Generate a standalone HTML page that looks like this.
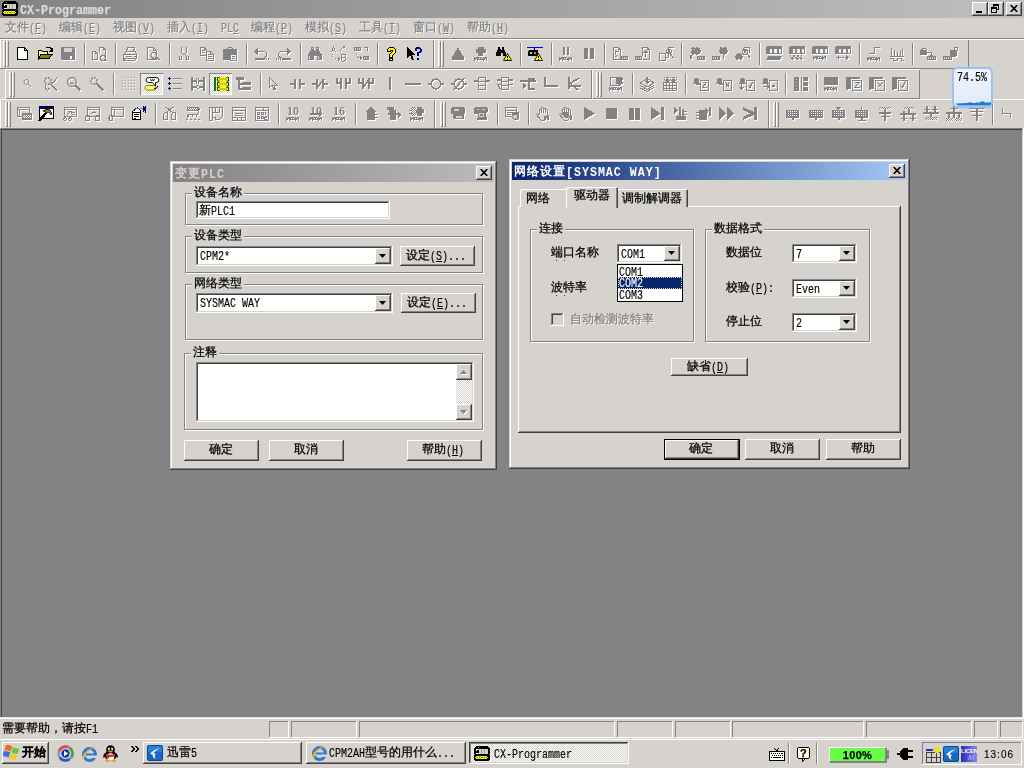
<!DOCTYPE html>
<html><head><meta charset="utf-8"><title>CX-Programmer</title>
<style>
*{box-sizing:border-box;margin:0;padding:0}
html,body{width:1024px;height:768px;overflow:hidden}
body{background:#848284;position:relative;font:12px/12px "Liberation Sans",sans-serif;color:#000;-webkit-text-stroke:0.25px}
div,span,svg{position:absolute;white-space:nowrap}
span.l,span.lb{position:relative;top:1px}u,span.t{position:static}
.l{font-family:"Liberation Mono",monospace;font-size:12px;display:inline-block;transform:scaleX(.8333);transform-origin:0 50%;-webkit-text-stroke:0.15px}
.lb{font-family:"Liberation Mono",monospace;font-size:12px;font-weight:bold;display:inline-block;transform:scaleX(.9722);transform-origin:0 50%}
u{text-decoration:underline}
.face{background:#d6d3ce}
.btn{background:#d6d3ce;box-shadow:inset -1px -1px #424142,inset 1px 1px #fff,inset -2px -2px #848284,inset 2px 2px #d6d3ce;text-align:center}
.btn .t{display:block;position:absolute;left:0;right:0;text-align:center}
.dbtn{background:#d6d3ce;border:1px solid #000;box-shadow:inset -1px -1px #424142,inset 1px 1px #fff,inset -2px -2px #848284,inset 2px 2px #d6d3ce}
.sunk{background:#fff;box-shadow:inset -1px -1px #fff,inset 1px 1px #848284,inset -2px -2px #d6d3ce,inset 2px 2px #424142}
.win{background:#d6d3ce;box-shadow:inset -1px -1px #424142,inset 1px 1px #d6d3ce,inset -2px -2px #848284,inset 2px 2px #fff}
.grp{border:1px solid #848284;box-shadow:1px 1px 0 #fff,inset 1px 1px 0 #fff}
.glab{background:#d6d3ce;padding:0 2px;height:12px}
.pane{box-shadow:inset -1px -1px #fff,inset 1px 1px #848284}
.cbtn{background:#d6d3ce;box-shadow:inset -1px -1px #424142,inset 1px 1px #fff,inset -2px -2px #848284,inset 2px 2px #d6d3ce}
.dis{color:#848284;text-shadow:1px 1px 0 #fff}
.chk{background-color:#fff;background-image:linear-gradient(45deg,#d6d3ce 25%,transparent 25%,transparent 75%,#d6d3ce 75%),linear-gradient(45deg,#d6d3ce 25%,transparent 25%,transparent 75%,#d6d3ce 75%);background-size:2px 2px;background-position:0 0,1px 1px}

.ic{overflow:visible}
.w .f{fill:#fff;stroke:none}.w .s{stroke:#fff;fill:none}.w .k{fill:url(#ckw);stroke:none}
.g .f{fill:#848284;stroke:none}.g .s{stroke:#848284;fill:none}.g .k{fill:url(#ck);stroke:none}
.e{fill:#d6d3ce;stroke:none}
.grip{width:3px;background:#d6d3ce;box-shadow:inset 1px 0 #fff,inset -1px 0 #848284,inset 0 1px #fff,inset 0 -1px #848284}
.sepv{width:2px;background:#fff;border-left:1px solid #848284}
.tbpress{box-shadow:inset 1px 1px #848284,inset -1px -1px #fff}
</style></head>
<body>
<div id="root" style="left:0;top:0;width:1024px;height:768px;will-change:transform">
<div class="" style="left:0px;top:0px;width:1024px;height:18px;background:linear-gradient(to right,#848284,#c0bec0)"></div><svg width="16" height="15" viewBox="0 0 17 16" preserveAspectRatio="none" style="left:2px;top:1px" shape-rendering="crispEdges">
<path d="M2 0h13v1h1v1h1v7h-1v1h1v5h-1v1H1v-1H0v-5h1V9H0V2h1V1h1z" fill="#000"/>
<rect x="2" y="3" width="13" height="5" fill="#d6d3ce"/><rect x="2" y="3" width="2" height="5" fill="#fff"/>
<path d="M3 4h2v3H2V5h1z" fill="#000"/><rect x="7" y="3" width="1" height="5" fill="#a0a0a0"/><rect x="11" y="3" width="1" height="5" fill="#a0a0a0"/>
<rect x="4" y="1" width="1" height="1" fill="#40c040"/>
<rect x="0" y="9" width="1" height="1" fill="#848284"/><rect x="16" y="9" width="1" height="1" fill="#848284"/>
<path d="M2 11h12v1h1v1h-1v1H2v-1H1v-1h1z" fill="#f0f000"/><path d="M3 12h1v1H3zM5 12h1v1H5zM7 12h1v1H7zM9 12h1v1H9zM11 12h1v1h-1zM13 12h1v1h-1z" fill="#808000"/></svg><div class="" style="left:20px;top:2px;height:14px;line-height:14px;color:#dcdad6"><span class="lb" style="margin-right:-2.6px">CX-Programmer</span></div><div class="cbtn" style="left:972px;top:2px;width:16px;height:14px;<span></span>"></div><div style="left:976px;top:11px;width:6px;height:2px;background:#000"></div><div class="cbtn" style="left:988px;top:2px;width:16px;height:14px;"></div><svg width="10" height="10" viewBox="0 0 10 10" style="left:991px;top:4px" shape-rendering="crispEdges">
<path d="M2 0h6v6h-2v-1h1v-3h-4v1h-1z" fill="#000"/><path d="M0 3h6v6h-6zM1 5v3h4v-3z" fill="#000" fill-rule="evenodd"/></svg><div class="cbtn" style="left:1006px;top:2px;width:16px;height:14px;"></div><svg width="8" height="7" viewBox="0 0 8 7" style="left:1010px;top:5px"><path d="M.7 0L7.300 7M7.300 0L.7 7" stroke="#000" stroke-width="1.600" fill="none"/></svg>
<div class="face" style="left:0px;top:18px;width:1024px;height:20px;"></div><div class="dis" style="left:5px;top:20px;height:14px;line-height:14px;">文件<span class="l" style="margin-right:-3.6px">(<u>F</u>)</span></div><div class="dis" style="left:59px;top:20px;height:14px;line-height:14px;">编辑<span class="l" style="margin-right:-3.6px">(<u>E</u>)</span></div><div class="dis" style="left:113px;top:20px;height:14px;line-height:14px;">视图<span class="l" style="margin-right:-3.6px">(<u>V</u>)</span></div><div class="dis" style="left:167px;top:20px;height:14px;line-height:14px;">插入<span class="l" style="margin-right:-3.6px">(<u>I</u>)</span></div><div class="dis" style="left:221px;top:20px;height:14px;line-height:14px;"><span class="l" style="margin-right:-2.4px">PL</span><span class="l" style="margin-right:-1.2px"><u>C</u></span></div><div class="dis" style="left:251px;top:20px;height:14px;line-height:14px;">编程<span class="l" style="margin-right:-3.6px">(<u>P</u>)</span></div><div class="dis" style="left:305px;top:20px;height:14px;line-height:14px;">模拟<span class="l" style="margin-right:-3.6px">(<u>S</u>)</span></div><div class="dis" style="left:359px;top:20px;height:14px;line-height:14px;">工具<span class="l" style="margin-right:-3.6px">(<u>T</u>)</span></div><div class="dis" style="left:413px;top:20px;height:14px;line-height:14px;">窗口<span class="l" style="margin-right:-3.6px">(<u>W</u>)</span></div><div class="dis" style="left:467px;top:20px;height:14px;line-height:14px;">帮助<span class="l" style="margin-right:-3.6px">(<u>H</u>)</span></div>
<svg width="0" height="0" style="left:0;top:0"><defs><pattern id="ck" width="2" height="2" patternUnits="userSpaceOnUse"><rect width="1" height="1" fill="#848284"/><rect x="1" y="1" width="1" height="1" fill="#848284"/></pattern><pattern id="ckw" width="2" height="2" patternUnits="userSpaceOnUse"><rect x="1" width="1" height="1" fill="#fff"/><rect y="1" width="1" height="1" fill="#fff"/></pattern><pattern id="dotw" width="2" height="2" patternUnits="userSpaceOnUse"><rect x="1" y="1" width="1" height="1" fill="#fff"/></pattern></defs></svg><div class="face" style="left:0;top:38px;width:1024px;height:91px"></div><div class="" style="left:0px;top:38px;width:1024px;height:1px;background:#848284"></div><div class="" style="left:0px;top:39px;width:1024px;height:1px;background:#fff"></div><div class="" style="left:0px;top:39px;width:434px;height:30px;box-shadow:inset 1px 1px #fff,inset -1px -1px #848284"></div><div class="" style="left:434px;top:39px;width:535px;height:30px;box-shadow:inset 1px 1px #fff,inset -1px -1px #848284"></div><div class="grip" style="left:3px;top:41px;width:3px;height:26px;"></div><div class="grip" style="left:6px;top:41px;width:3px;height:26px;"></div><div class="grip" style="left:438px;top:41px;width:3px;height:26px;"></div><div class="grip" style="left:441px;top:41px;width:3px;height:26px;"></div><div class="" style="left:0px;top:68px;width:968px;height:1px;background:#848284"></div><div class="" style="left:5px;top:69px;width:587px;height:30px;box-shadow:inset 1px 1px #fff,inset -1px -1px #848284"></div><div class="" style="left:592px;top:69px;width:328px;height:30px;box-shadow:inset 1px 1px #fff,inset -1px -1px #848284"></div><div class="grip" style="left:9px;top:72px;width:3px;height:25px;"></div><div class="grip" style="left:12px;top:72px;width:3px;height:25px;"></div><div class="grip" style="left:596px;top:72px;width:3px;height:25px;"></div><div class="grip" style="left:599px;top:72px;width:3px;height:25px;"></div><div class="" style="left:0px;top:99px;width:435px;height:30px;box-shadow:inset 1px 1px #fff,inset -1px -1px #848284"></div><div class="" style="left:435px;top:99px;width:334px;height:30px;box-shadow:inset 1px 1px #fff,inset -1px -1px #848284"></div><div class="" style="left:769px;top:99px;width:256px;height:30px;box-shadow:inset 1px 1px #fff,inset -1px -1px #848284"></div><div class="grip" style="left:5px;top:102px;width:3px;height:25px;"></div><div class="grip" style="left:8px;top:102px;width:3px;height:25px;"></div><div class="grip" style="left:440px;top:102px;width:3px;height:25px;"></div><div class="grip" style="left:443px;top:102px;width:3px;height:25px;"></div><div class="grip" style="left:773px;top:102px;width:3px;height:25px;"></div><div class="grip" style="left:776px;top:102px;width:3px;height:25px;"></div><svg class="ic" width="16" height="16" viewBox="0 0 16 16" shape-rendering="crispEdges" style="left:14px;top:46px"><path d="M3.5 1.5h7l3 3v9h-10z" fill="#fff" stroke="#000"/><path d="M10.5 1.500v3h3" fill="none" stroke="#000"/></svg><svg class="ic" width="16" height="16" viewBox="0 0 16 16" shape-rendering="crispEdges" style="left:37px;top:46px"><path d="M1.500 4.500h3l1 1h5v2.500h-6.500l-2.500 4.500z" fill="#ffff9c" stroke="#000"/><path d="M1.500 12.500l3-4.500h11l-3.500 4.500z" fill="#848200" stroke="#000"/><path d="M8.500 2.500q3-3 6 .5" fill="none" stroke="#000"/><path d="M16 1v4.500h-4.500z" fill="#000"/></svg><svg class="ic" width="16" height="16" viewBox="0 0 16 16" shape-rendering="crispEdges" style="left:60px;top:46px"><g class="w" transform="translate(1,1)"><path class="f" d="M1 1h13l1 1v12H2l-1-1z"/></g><g class="g"><path class="f" d="M1 1h13l1 1v12H2l-1-1z"/></g><path class="e" d="M4 2h8v4h-8z"/><path d="M10 10h2v3h-2z" fill="#fff"/><path d="M13 2h1v1h-1z" fill="#d6d3ce"/></svg><div class="sepv" style="left:84px;top:43px;width:2px;height:22px;"></div><svg class="ic" width="16" height="16" viewBox="0 0 16 16" shape-rendering="crispEdges" style="left:91px;top:46px"><g class="w" transform="translate(1,1)"><path class="s" d="M1.5 13.500v-8h3l2 2v6zM8.500 5.500v-4h4l2 2v6"/><path class="s" d="M4.500 5.500v2h2M12.500 1.500v2h2"/><path class="s" d="M12 9.500a2.500 2.500 0 1 1-.1 0M13.500 13l2 2"/></g><g class="g"><path class="s" d="M1.5 13.500v-8h3l2 2v6zM8.500 5.500v-4h4l2 2v6"/><path class="s" d="M4.500 5.500v2h2M12.500 1.500v2h2"/><path class="s" d="M12 9.500a2.500 2.500 0 1 1-.1 0M13.500 13l2 2"/></g></svg><div class="sepv" style="left:115px;top:43px;width:2px;height:22px;"></div><svg class="ic" width="16" height="16" viewBox="0 0 16 16" shape-rendering="crispEdges" style="left:122px;top:46px"><g class="w" transform="translate(1,1)"><path class="s" d="M4.500 5.500l1-4h7l-1 4M1.500 8.500l3-3h9l1 3v4h-13zM1.500 8.500h13M3.500 10.500h6M11.500 10.500h2M2.500 12.500l-1 2h11l2-2"/></g><g class="g"><path class="s" d="M4.500 5.500l1-4h7l-1 4M1.500 8.500l3-3h9l1 3v4h-13zM1.500 8.500h13M3.500 10.500h6M11.500 10.500h2M2.500 12.500l-1 2h11l2-2"/></g></svg><svg class="ic" width="16" height="16" viewBox="0 0 16 16" shape-rendering="crispEdges" style="left:145px;top:46px"><g class="w" transform="translate(1,1)"><path class="s" d="M2.500 1.500h6l3 3v9h-9zM8.500 1.500v3h3"/><path class="s" d="M9 6.500a3 3 0 1 1-.1 0M11.500 11.500l3 3M12.500 11.500l3 3"/></g><g class="g"><path class="s" d="M2.500 1.500h6l3 3v9h-9zM8.500 1.500v3h3"/><path class="s" d="M9 6.500a3 3 0 1 1-.1 0M11.500 11.500l3 3M12.500 11.500l3 3"/></g></svg><div class="sepv" style="left:169px;top:43px;width:2px;height:22px;"></div><svg class="ic" width="16" height="16" viewBox="0 0 16 16" shape-rendering="crispEdges" style="left:176px;top:46px"><g class="w" transform="translate(1,1)"><path class="s" d="M5.500 1v5l2 3M10.500 1v5l-2 3M6.500 9.500l-1.500 1M9.500 9.500l1.500 1"/><path class="s" d="M4.500 10a1.500 2 0 1 1-.1 0M11.500 10a1.500 2 0 1 1-.1 0"/></g><g class="g"><path class="s" d="M5.500 1v5l2 3M10.500 1v5l-2 3M6.500 9.500l-1.500 1M9.500 9.500l1.500 1"/><path class="s" d="M4.500 10a1.500 2 0 1 1-.1 0M11.500 10a1.500 2 0 1 1-.1 0"/></g></svg><svg class="ic" width="16" height="16" viewBox="0 0 16 16" shape-rendering="crispEdges" style="left:199px;top:46px"><g class="w" transform="translate(1,1)"><path class="s" d="M1.500 1.500h4l2 2v6h-6zM5.500 1.500v2h2M3 4.500h3M3 6.500h3"/><path class="s" d="M7.500 5.500h4l3 3v6h-7zM11.500 5.500v3h3M9 8.500h2M9 10.500h4M9 12.500h4"/></g><g class="g"><path class="s" d="M1.500 1.500h4l2 2v6h-6zM5.500 1.500v2h2M3 4.500h3M3 6.500h3"/><path class="s" d="M7.500 5.500h4l3 3v6h-7zM11.500 5.500v3h3M9 8.500h2M9 10.500h4M9 12.500h4"/></g></svg><svg class="ic" width="16" height="16" viewBox="0 0 16 16" shape-rendering="crispEdges" style="left:222px;top:46px"><g class="w" transform="translate(1,1)"><path class="f" d="M1 3h4l1-2h4l1 2h4v5H8v6H1z"/><path class="s" d="M8.500 8.500h6v6h-6zM10 10.500h3M10 12.500h3"/></g><g class="g"><path class="f" d="M1 3h4l1-2h4l1 2h4v5H8v6H1z"/><path class="s" d="M8.500 8.500h6v6h-6zM10 10.500h3M10 12.500h3"/></g><path class="e" d="M6 2h4v1h-4z"/></svg><div class="sepv" style="left:246px;top:43px;width:2px;height:22px;"></div><svg class="ic" width="16" height="16" viewBox="0 0 16 16" shape-rendering="crispEdges" style="left:253px;top:46px"><g class="w" transform="translate(1,1)"><path class="s" d="M4 5.500h6.500q3 0 3 3t-3 3"/><path class="f" d="M1 5.500l4-3.500v7z"/><path class="f" d="M2 12h9v2h-9z"/><path class="s" d="M11.500 12v2M13.500 12v2M15.500 12v2"/></g><g class="g"><path class="s" d="M4 5.500h6.500q3 0 3 3t-3 3"/><path class="f" d="M1 5.500l4-3.500v7z"/><path class="f" d="M2 12h9v2h-9z"/><path class="s" d="M11.500 12v2M13.500 12v2M15.500 12v2"/></g></svg><svg class="ic" width="16" height="16" viewBox="0 0 16 16" shape-rendering="crispEdges" style="left:276px;top:46px"><g class="w" transform="translate(1,1)"><path class="s" d="M12 5.500h-6.500q-3 0-3 3t3 3"/><path class="f" d="M15 5.500l-4-3.500v7z"/><path class="f" d="M6 12h9v2h-9z"/><path class="s" d="M0.500 12v2M2.500 12v2M4.500 12v2"/></g><g class="g"><path class="s" d="M12 5.500h-6.500q-3 0-3 3t3 3"/><path class="f" d="M15 5.500l-4-3.500v7z"/><path class="f" d="M6 12h9v2h-9z"/><path class="s" d="M0.500 12v2M2.500 12v2M4.500 12v2"/></g></svg><div class="sepv" style="left:300px;top:43px;width:2px;height:22px;"></div><svg class="ic" width="16" height="16" viewBox="0 0 16 16" shape-rendering="crispEdges" style="left:307px;top:46px"><g class="w" transform="translate(1,1)"><path class="f" d="M4 1h3v3l1 1 1-1V1h3v3l3 5v5h-5v-4H7v4H1V9l3-5z"/></g><g class="g"><path class="f" d="M4 1h3v3l1 1 1-1V1h3v3l3 5v5h-5v-4H7v4H1V9l3-5z"/></g><path class="e" d="M2 10h1v3h-1z"/><path class="e" d="M11 10h1v3h-1z"/><path class="e" d="M5 2h1v1h-1z"/><path class="e" d="M10 2h1v1h-1z"/></svg><svg class="ic" width="16" height="16" viewBox="0 0 16 16" shape-rendering="crispEdges" style="left:330px;top:46px"><g class="w" transform="translate(1,1)"><path class="s" d="M1.500 6l2-5 2 5M2.500 4.500h2"/><path class="s" stroke-dasharray="1 1" d="M2.500 8q0 5 5 5"/><path class="s" stroke-dasharray="1 1" d="M13.500 1q-3 1-3 4"/><path class="f" d="M8 10.500l3 2.500-3 2.500zM12 0h3v3z"/><path class="s" d="M11.500 15V8h2.500q1.500 0 1.500 1.750T14 11.500h-2.500M14 11.500q1.500 0 1.500 1.750T14 15h-2.500"/></g><g class="g"><path class="s" d="M1.500 6l2-5 2 5M2.500 4.500h2"/><path class="s" stroke-dasharray="1 1" d="M2.500 8q0 5 5 5"/><path class="s" stroke-dasharray="1 1" d="M13.500 1q-3 1-3 4"/><path class="f" d="M8 10.500l3 2.500-3 2.500zM12 0h3v3z"/><path class="s" d="M11.500 15V8h2.500q1.500 0 1.500 1.750T14 11.500h-2.500M14 11.500q1.500 0 1.500 1.750T14 15h-2.500"/></g></svg><svg class="ic" width="16" height="16" viewBox="0 0 16 16" shape-rendering="crispEdges" style="left:353px;top:46px"><g class="w" transform="translate(1,1)"><path class="f" d="M1 1h7v4H1z"/><path class="s" d="M11 1.500h3v3"/><path class="s" stroke-dasharray="1 1" d="M3.500 6q0 6 4 6"/><path class="f" d="M7 9.500l3 2.500-3 2.500z"/><path class="f" d="M10 10h6v4h-6z"/></g><g class="g"><path class="f" d="M1 1h7v4H1z"/><path class="s" d="M11 1.500h3v3"/><path class="s" stroke-dasharray="1 1" d="M3.500 6q0 6 4 6"/><path class="f" d="M7 9.500l3 2.500-3 2.500z"/><path class="f" d="M10 10h6v4h-6z"/></g><path class="e" d="M2 2h1v2h-1z"/><path class="e" d="M4 2h1v2h-1z"/><path class="e" d="M6 2h1v2h-1z"/><path class="e" d="M11 11h1v2h-1z"/><path class="e" d="M13 11h1v2h-1z"/></svg><div class="sepv" style="left:377px;top:43px;width:2px;height:22px;"></div><svg class="ic" width="16" height="16" viewBox="0 0 16 16" shape-rendering="crispEdges" style="left:384px;top:46px"><path d="M3.500 5.500v-2l2-2h4l2 2v3l-3 3v2h-3v-3l3-3v-1h-2v1zM5.500 12.500h3v2h-3z" fill="#ffff00" stroke="#000"/></svg><svg class="ic" width="16" height="16" viewBox="0 0 16 16" shape-rendering="crispEdges" style="left:407px;top:46px"><path d="M0 1v11l3-3 2 5h2l-2-5h4z" fill="#000"/><path d="M7.500 5V3l2-2h3l2 2v3l-3 2v2h-2V7l3-2V3h-3v2zM9.500 12h2v2h-2z" fill="#000080"/></svg><svg class="ic" width="16" height="16" viewBox="0 0 16 16" shape-rendering="crispEdges" style="left:450px;top:46px"><g class="w" transform="translate(1,1)"><path class="f" d="M8 1l6.500 11-1 2h-11l-1-2z"/></g><g class="g"><path class="f" d="M8 1l6.500 11-1 2h-11l-1-2z"/></g></svg><svg class="ic" width="16" height="16" viewBox="0 0 16 16" shape-rendering="crispEdges" style="left:473px;top:46px"><g class="w" transform="translate(1,1)"><path class="f" d="M5 1h6v2h2v4h-3v3H5V7H3V3h2z"/><path class="s" d="M2 11q-1.5 1.5 0 3.5M4 11q1.5 1.500 0 3.5M2.2 14.2l1.500 -3M6.5 11q-1.5 1.5 0 3.5M8.5 11q1.5 1.500 0 3.5M6.7 14.2l1.500 -3M11 11q-1.5 1.5 0 3.5M13 11q1.5 1.500 0 3.5M11.2 14.2l1.500 -3"/></g><g class="g"><path class="f" d="M5 1h6v2h2v4h-3v3H5V7H3V3h2z"/><path class="s" d="M2 11q-1.5 1.5 0 3.5M4 11q1.5 1.500 0 3.5M2.2 14.2l1.500 -3M6.5 11q-1.5 1.5 0 3.5M8.5 11q1.5 1.500 0 3.5M6.7 14.2l1.500 -3M11 11q-1.5 1.5 0 3.5M13 11q1.5 1.500 0 3.5M11.2 14.2l1.500 -3"/></g></svg><svg class="ic" width="16" height="16" viewBox="0 0 16 16" shape-rendering="crispEdges" style="left:496px;top:46px"><path d="M2 1h2v2l1 1 1-1V1h2v2l2 4v3H7V7H5v3H0V7l2-4z" fill="#000"/><path shape-rendering="auto" d="M11.500 7.500l4 7h-8z" fill="#ffff00" stroke="#000" stroke-width=".9"/><path d="M11 10h1v2h-1zM11 13h1v1h-1z" fill="#000"/></svg><div class="sepv" style="left:520px;top:43px;width:2px;height:22px;"></div><svg class="ic" width="16" height="16" viewBox="0 0 16 16" shape-rendering="crispEdges" style="left:527px;top:46px"><path d="M0 1.500h16" stroke="#0000ff" stroke-width="1.500"/><path d="M7.500 2v3" stroke="#000"/><rect x="1" y="4" width="10" height="6" rx="2" fill="#000"/><rect x="3" y="6" width="2" height="2" fill="#80ff80"/><rect x="7" y="6" width="2" height="2" fill="#ff6060"/><path shape-rendering="auto" d="M11.500 7.500l4 7h-8z" fill="#ffff00" stroke="#000" stroke-width=".9"/><path d="M11 10h1v2h-1zM11 13h1v1h-1z" fill="#000"/></svg><div class="sepv" style="left:551px;top:43px;width:2px;height:22px;"></div><svg class="ic" width="16" height="16" viewBox="0 0 16 16" shape-rendering="crispEdges" style="left:558px;top:46px"><g class="w" transform="translate(1,1)"><path class="f" d="M5 1h2v8h-2z"/><path class="f" d="M9 1h2v8h-2z"/><path class="s" d="M2 11q-1.5 1.5 0 3.5M4 11q1.5 1.500 0 3.5M2.2 14.2l1.500 -3M6.5 11q-1.5 1.5 0 3.5M8.5 11q1.5 1.500 0 3.5M6.7 14.2l1.500 -3M11 11q-1.5 1.5 0 3.5M13 11q1.5 1.500 0 3.5M11.2 14.2l1.500 -3"/></g><g class="g"><path class="f" d="M5 1h2v8h-2z"/><path class="f" d="M9 1h2v8h-2z"/><path class="s" d="M2 11q-1.5 1.5 0 3.5M4 11q1.5 1.500 0 3.5M2.2 14.2l1.500 -3M6.5 11q-1.5 1.5 0 3.5M8.5 11q1.5 1.500 0 3.5M6.7 14.2l1.500 -3M11 11q-1.5 1.5 0 3.5M13 11q1.5 1.500 0 3.5M11.2 14.2l1.500 -3"/></g></svg><svg class="ic" width="16" height="16" viewBox="0 0 16 16" shape-rendering="crispEdges" style="left:581px;top:46px"><g class="w" transform="translate(1,1)"><path class="f" d="M3 2h4v11h-4z"/><path class="f" d="M9 2h4v11h-4z"/></g><g class="g"><path class="f" d="M3 2h4v11h-4z"/><path class="f" d="M9 2h4v11h-4z"/></g></svg><div class="sepv" style="left:604px;top:43px;width:2px;height:22px;"></div><svg class="ic" width="16" height="16" viewBox="0 0 16 16" shape-rendering="crispEdges" style="left:612px;top:46px"><g class="w" transform="translate(1,1)"><path class="s" d="M1.500 1.500h5l2 2v9.500h-7zM6.500 1.500v2h2M3.500 4v5M3.500 5.500h3M5 9.500l-1.500 1.500"/><path class="f" d="M9 10h7v4H9z"/></g><g class="g"><path class="s" d="M1.500 1.500h5l2 2v9.500h-7zM6.500 1.500v2h2M3.500 4v5M3.500 5.500h3M5 9.500l-1.500 1.500"/><path class="f" d="M9 10h7v4H9z"/></g><path class="e" d="M10 11h1v2h-1z"/><path class="e" d="M12 11h1v2h-1z"/><path class="e" d="M14 11h1v2h-1z"/></svg><svg class="ic" width="16" height="16" viewBox="0 0 16 16" shape-rendering="crispEdges" style="left:635px;top:46px"><g class="w" transform="translate(1,1)"><path class="s" d="M7.500 10V1.500h5l2 2v9.500h-7M12.500 1.500v2h2M10.500 11V5M8.500 7l2-2 2 2"/><path class="f" d="M0 10h7v4H0z"/></g><g class="g"><path class="s" d="M7.500 10V1.500h5l2 2v9.500h-7M12.500 1.500v2h2M10.500 11V5M8.500 7l2-2 2 2"/><path class="f" d="M0 10h7v4H0z"/></g><path class="e" d="M1 11h1v2h-1z"/><path class="e" d="M3 11h1v2h-1z"/><path class="e" d="M5 11h1v2h-1z"/></svg><svg class="ic" width="16" height="16" viewBox="0 0 16 16" shape-rendering="crispEdges" style="left:658px;top:46px"><g class="w" transform="translate(1,1)"><path class="s" d="M1.500 7.500h6v7h-6zM7.500 11.500h3V1.500h5"/><path class="s" d="M11 3a2.500 2.500 0 1 1-.1 0M12.500 8l3 4M9.500 3l3 4M12.500 3l-3 4"/></g><g class="g"><path class="s" d="M1.500 7.500h6v7h-6zM7.500 11.500h3V1.500h5"/><path class="s" d="M11 3a2.500 2.500 0 1 1-.1 0M12.500 8l3 4M9.500 3l3 4M12.500 3l-3 4"/></g></svg><div class="sepv" style="left:681px;top:43px;width:2px;height:22px;"></div><svg class="ic" width="16" height="16" viewBox="0 0 16 16" shape-rendering="crispEdges" style="left:689px;top:46px"><g class="w" transform="translate(1,1)"><path class="f" d="M3 1h2v1h2V1h2v1h2v2h1v2h-1v2H9v1H7V8H5v1H3V7H2V5h1V3H2V2h1z"/><path class="f" d="M1 9h2v4H1z"/><path class="f" d="M8 10h8v4H8z"/></g><g class="g"><path class="f" d="M3 1h2v1h2V1h2v1h2v2h1v2h-1v2H9v1H7V8H5v1H3V7H2V5h1V3H2V2h1z"/><path class="f" d="M1 9h2v4H1z"/><path class="f" d="M8 10h8v4H8z"/></g><path class="e" d="M9 11h1v2h-1z"/><path class="e" d="M11 11h1v2h-1z"/><path class="e" d="M13 11h1v2h-1z"/><path class="e" d="M5 3h1v1h-1z"/><path class="e" d="M8 5h1v1h-1z"/></svg><svg class="ic" width="16" height="16" viewBox="0 0 16 16" shape-rendering="crispEdges" style="left:712px;top:46px"><g class="w" transform="translate(1,1)"><path class="f" d="M8 1h2v1h2V1h2v1h1v2h1v2h-1v2h-2v1h-2V8H8V6H7V4h1z"/><path class="s" d="M11.500 13V5M9.500 7l2-2 2 2"/><path class="f" d="M0 10h8v4H0z"/></g><g class="g"><path class="f" d="M8 1h2v1h2V1h2v1h1v2h1v2h-1v2h-2v1h-2V8H8V6H7V4h1z"/><path class="s" d="M11.500 13V5M9.500 7l2-2 2 2"/><path class="f" d="M0 10h8v4H0z"/></g><path class="e" d="M1 11h1v2h-1z"/><path class="e" d="M3 11h1v2h-1z"/><path class="e" d="M5 11h1v2h-1z"/></svg><svg class="ic" width="16" height="16" viewBox="0 0 16 16" shape-rendering="crispEdges" style="left:735px;top:46px"><g class="w" transform="translate(1,1)"><path class="f" d="M1 8h2V7h2v1h2v2h1v2H7v2H5v-1H3v1H1v-2H0v-2h1z"/><path class="s" d="M8.500 1.500h6v5M8.500 1.500v2"/><path class="s" d="M10 3.500a2.500 2.500 0 1 1-.1 0M12 8l3.500 4.500M8.500 3.500l3 4M11.500 3.500l-3 4"/></g><g class="g"><path class="f" d="M1 8h2V7h2v1h2v2h1v2H7v2H5v-1H3v1H1v-2H0v-2h1z"/><path class="s" d="M8.500 1.500h6v5M8.500 1.500v2"/><path class="s" d="M10 3.500a2.500 2.500 0 1 1-.1 0M12 8l3.500 4.500M8.500 3.500l3 4M11.500 3.500l-3 4"/></g></svg><div class="sepv" style="left:759px;top:43px;width:2px;height:22px;"></div><svg class="ic" width="16" height="16" viewBox="0 0 16 16" shape-rendering="crispEdges" style="left:766px;top:46px"><g class="w" transform="translate(1,1)"><path class="f" d="M1 0h14l1 1v7H0V1z"/><path class="f" d="M2 10h14l-2 4H0z"/></g><g class="g"><path class="f" d="M1 0h14l1 1v7H0V1z"/><path class="f" d="M2 10h14l-2 4H0z"/></g><path d="M2 3h4v4H2zM7 3h4v4H7zM12 3h3v4h-3z" fill="#f4f4f4"/><path d="M2 3h2v4H2zM7 3h1v4H7zM12 3h1v4h-1z" fill="#848284"/></svg><svg class="ic" width="16" height="16" viewBox="0 0 16 16" shape-rendering="crispEdges" style="left:789px;top:46px"><g class="w" transform="translate(1,1)"><path class="f" d="M1 0h14l1 1v7H0V1z"/><path class="s" d="M1 9.500l2 2.500 2-2.500 2 2.500 2-2.500 2 2.500 2-2.500"/><path class="f" d="M2 12h3l-1.500 2zM7 12h3l-1.500 2zM11 12h3l-1.500 2z"/></g><g class="g"><path class="f" d="M1 0h14l1 1v7H0V1z"/><path class="s" d="M1 9.500l2 2.500 2-2.500 2 2.500 2-2.500 2 2.500 2-2.500"/><path class="f" d="M2 12h3l-1.500 2zM7 12h3l-1.500 2zM11 12h3l-1.500 2z"/></g><path d="M2 3h4v4H2zM7 3h4v4H7zM12 3h3v4h-3z" fill="#f4f4f4"/><path d="M2 3h2v4H2zM7 3h1v4H7zM12 3h1v4h-1z" fill="#848284"/></svg><svg class="ic" width="16" height="16" viewBox="0 0 16 16" shape-rendering="crispEdges" style="left:812px;top:46px"><g class="w" transform="translate(1,1)"><path class="f" d="M1 0h14l1 1v7H0V1z"/><path class="s" d="M2 10q-1.5 1.5 0 3.5M4 10q1.5 1.500 0 3.5M2.2 13.2l1.500 -3M6.5 10q-1.5 1.5 0 3.5M8.5 10q1.5 1.500 0 3.5M6.7 13.2l1.500 -3M11 10q-1.5 1.5 0 3.5M13 10q1.5 1.500 0 3.5M11.2 13.2l1.500 -3"/></g><g class="g"><path class="f" d="M1 0h14l1 1v7H0V1z"/><path class="s" d="M2 10q-1.5 1.5 0 3.5M4 10q1.5 1.500 0 3.5M2.2 13.2l1.500 -3M6.5 10q-1.5 1.5 0 3.5M8.5 10q1.5 1.500 0 3.5M6.7 13.2l1.500 -3M11 10q-1.5 1.5 0 3.5M13 10q1.5 1.500 0 3.5M11.2 13.2l1.500 -3"/></g><path d="M2 3h4v4H2zM7 3h4v4H7zM12 3h3v4h-3z" fill="#f4f4f4"/><path d="M2 3h2v4H2zM7 3h1v4H7zM12 3h1v4h-1z" fill="#848284"/></svg><svg class="ic" width="16" height="16" viewBox="0 0 16 16" shape-rendering="crispEdges" style="left:835px;top:46px"><g class="w" transform="translate(1,1)"><path class="f" d="M1 0h14l1 1v7H0V1z"/><path class="s" stroke-dasharray="2 1" d="M1 11.500h11"/><path class="f" d="M11 9l3 2.500-3 2.500z"/><path class="s" d="M3.500 9.500v4"/></g><g class="g"><path class="f" d="M1 0h14l1 1v7H0V1z"/><path class="s" stroke-dasharray="2 1" d="M1 11.500h11"/><path class="f" d="M11 9l3 2.500-3 2.500z"/><path class="s" d="M3.500 9.500v4"/></g><path d="M2 3h4v4H2zM7 3h4v4H7zM12 3h3v4h-3z" fill="#f4f4f4"/><path d="M2 3h2v4H2zM7 3h1v4H7zM12 3h1v4h-1z" fill="#848284"/></svg><div class="sepv" style="left:859px;top:43px;width:2px;height:22px;"></div><svg class="ic" width="16" height="16" viewBox="0 0 16 16" shape-rendering="crispEdges" style="left:866px;top:46px"><g class="w" transform="translate(1,1)"><path class="s" d="M3 7.500h5V1.500h6"/><path class="s" d="M2 11q-1.5 1.5 0 3.5M4 11q1.5 1.500 0 3.5M2.2 14.2l1.500 -3M6.5 11q-1.5 1.5 0 3.5M8.5 11q1.5 1.500 0 3.5M6.7 14.2l1.500 -3M11 11q-1.5 1.5 0 3.5M13 11q1.5 1.500 0 3.5M11.2 14.2l1.500 -3"/></g><g class="g"><path class="s" d="M3 7.500h5V1.500h6"/><path class="s" d="M2 11q-1.5 1.5 0 3.5M4 11q1.5 1.500 0 3.5M2.2 14.2l1.500 -3M6.5 11q-1.5 1.5 0 3.5M8.5 11q1.5 1.500 0 3.5M6.7 14.2l1.500 -3M11 11q-1.5 1.5 0 3.5M13 11q1.5 1.500 0 3.5M11.2 14.2l1.500 -3"/></g></svg><svg class="ic" width="16" height="16" viewBox="0 0 16 16" shape-rendering="crispEdges" style="left:889px;top:46px"><g class="w" transform="translate(1,1)"><path class="s" d="M2.500 2v8M5.500 4v6M8.500 6v4M11.500 5v5M13.500 3v7M1 10.500h14"/><path class="s" d="M1 12.500h3v2h4v-2h4v2h3"/></g><g class="g"><path class="s" d="M2.500 2v8M5.500 4v6M8.500 6v4M11.500 5v5M13.500 3v7M1 10.500h14"/><path class="s" d="M1 12.500h3v2h4v-2h4v2h3"/></g></svg><div class="sepv" style="left:912px;top:43px;width:2px;height:22px;"></div><svg class="ic" width="16" height="16" viewBox="0 0 16 16" shape-rendering="crispEdges" style="left:920px;top:46px"><g class="w" transform="translate(1,1)"><path class="f" d="M1 5a3 3 0 0 1 6 0v1H6V5a2 2 0 0 0-4 0v1H1z"/><path class="f" d="M0 4h7v5H0z"/><path class="s" d="M7 6.500h4.500v3"/><path class="f" d="M11 8h1l1 2h-3z"/><path class="f" d="M7 10h9v4H7z"/></g><g class="g"><path class="f" d="M1 5a3 3 0 0 1 6 0v1H6V5a2 2 0 0 0-4 0v1H1z"/><path class="f" d="M0 4h7v5H0z"/><path class="s" d="M7 6.500h4.500v3"/><path class="f" d="M11 8h1l1 2h-3z"/><path class="f" d="M7 10h9v4H7z"/></g><path class="e" d="M8 11h1v2h-1z"/><path class="e" d="M10 11h1v2h-1z"/><path class="e" d="M12 11h1v2h-1z"/><path class="e" d="M14 11h1v2h-1z"/></svg><svg class="ic" width="16" height="16" viewBox="0 0 16 16" shape-rendering="crispEdges" style="left:943px;top:46px"><g class="w" transform="translate(1,1)"><path class="f" d="M0 10h9v4H0z"/><path class="f" d="M7 4h7v5l-2 2H9L7 9z"/><path class="s" d="M11.500 4V2.500q0-1 1.500-1t1.500 1V5"/><path class="s" d="M6 11.500l2-2"/></g><g class="g"><path class="f" d="M0 10h9v4H0z"/><path class="f" d="M7 4h7v5l-2 2H9L7 9z"/><path class="s" d="M11.500 4V2.500q0-1 1.500-1t1.500 1V5"/><path class="s" d="M6 11.500l2-2"/></g><path class="e" d="M1 11h1v2h-1z"/><path class="e" d="M3 11h1v2h-1z"/><path class="e" d="M5 11h1v2h-1z"/><path class="e" d="M7 11h1v2h-1z"/></svg><svg class="ic" width="16" height="16" viewBox="0 0 16 16" shape-rendering="crispEdges" style="left:20px;top:76px"><g class="w" transform="translate(1,1)"><path class="s" shape-rendering="auto" d="M6.500 3.500a2.500 2.500 0 1 1-.1 0"/><path class="s" d="M8.500 8.500l3 3"/></g><g class="g"><path class="s" shape-rendering="auto" d="M6.500 3.500a2.500 2.500 0 1 1-.1 0"/><path class="s" d="M8.500 8.500l3 3"/></g></svg><svg class="ic" width="16" height="16" viewBox="0 0 16 16" shape-rendering="crispEdges" style="left:43px;top:76px"><g class="w" transform="translate(1,1)"><path class="s" shape-rendering="auto" stroke-dasharray="1.700 1" stroke-width="2" d="M5 2a3.200 3.200 0 1 1-.1 0"/><path class="s" stroke-width="1.800" d="M7.500 8l6.500 6.500"/><path class="s" d="M2.500 9v3l2 2.500 2-2.500M15 1l-7 8"/></g><g class="g"><path class="s" shape-rendering="auto" stroke-dasharray="1.700 1" stroke-width="2" d="M5 2a3.200 3.200 0 1 1-.1 0"/><path class="s" stroke-width="1.800" d="M7.500 8l6.500 6.500"/><path class="s" d="M2.500 9v3l2 2.500 2-2.500M15 1l-7 8"/></g></svg><svg class="ic" width="16" height="16" viewBox="0 0 16 16" shape-rendering="crispEdges" style="left:66px;top:76px"><g class="w" transform="translate(1,1)"><path class="s" shape-rendering="auto" stroke-width="1.300" d="M6 1.500a4.500 4.500 0 1 1-.1 0M4 6.500q2 2.500 4 0"/><path class="s" stroke-width="1.800" d="M9.500 9.500l5 5"/></g><g class="g"><path class="s" shape-rendering="auto" stroke-width="1.300" d="M6 1.500a4.500 4.500 0 1 1-.1 0M4 6.500q2 2.500 4 0"/><path class="s" stroke-width="1.800" d="M9.500 9.500l5 5"/></g></svg><svg class="ic" width="16" height="16" viewBox="0 0 16 16" shape-rendering="crispEdges" style="left:89px;top:76px"><g class="w" transform="translate(1,1)"><path class="s" shape-rendering="auto" stroke-dasharray="1.700 1" stroke-width="2" d="M5 2a3.200 3.200 0 1 1-.1 0"/><path class="s" stroke-width="1.800" d="M8 8l6.500 6.500"/></g><g class="g"><path class="s" shape-rendering="auto" stroke-dasharray="1.700 1" stroke-width="2" d="M5 2a3.200 3.200 0 1 1-.1 0"/><path class="s" stroke-width="1.800" d="M8 8l6.500 6.500"/></g></svg><div class="sepv" style="left:113px;top:73px;width:2px;height:22px;"></div><svg class="ic" width="16" height="16" viewBox="0 0 16 16" shape-rendering="crispEdges" style="left:121px;top:76px"><rect x="1" y="1" width="1" height="1" fill="#9c9a9c"/><rect x="2" y="2" width="1" height="1" fill="#fff" opacity=".7"/><rect x="1" y="4" width="1" height="1" fill="#9c9a9c"/><rect x="2" y="5" width="1" height="1" fill="#fff" opacity=".7"/><rect x="1" y="7" width="1" height="1" fill="#9c9a9c"/><rect x="2" y="8" width="1" height="1" fill="#fff" opacity=".7"/><rect x="1" y="10" width="1" height="1" fill="#9c9a9c"/><rect x="2" y="11" width="1" height="1" fill="#fff" opacity=".7"/><rect x="1" y="13" width="1" height="1" fill="#9c9a9c"/><rect x="2" y="14" width="1" height="1" fill="#fff" opacity=".7"/><rect x="4" y="1" width="1" height="1" fill="#9c9a9c"/><rect x="5" y="2" width="1" height="1" fill="#fff" opacity=".7"/><rect x="4" y="4" width="1" height="1" fill="#9c9a9c"/><rect x="5" y="5" width="1" height="1" fill="#fff" opacity=".7"/><rect x="4" y="7" width="1" height="1" fill="#9c9a9c"/><rect x="5" y="8" width="1" height="1" fill="#fff" opacity=".7"/><rect x="4" y="10" width="1" height="1" fill="#9c9a9c"/><rect x="5" y="11" width="1" height="1" fill="#fff" opacity=".7"/><rect x="4" y="13" width="1" height="1" fill="#9c9a9c"/><rect x="5" y="14" width="1" height="1" fill="#fff" opacity=".7"/><rect x="7" y="1" width="1" height="1" fill="#9c9a9c"/><rect x="8" y="2" width="1" height="1" fill="#fff" opacity=".7"/><rect x="7" y="4" width="1" height="1" fill="#9c9a9c"/><rect x="8" y="5" width="1" height="1" fill="#fff" opacity=".7"/><rect x="7" y="7" width="1" height="1" fill="#9c9a9c"/><rect x="8" y="8" width="1" height="1" fill="#fff" opacity=".7"/><rect x="7" y="10" width="1" height="1" fill="#9c9a9c"/><rect x="8" y="11" width="1" height="1" fill="#fff" opacity=".7"/><rect x="7" y="13" width="1" height="1" fill="#9c9a9c"/><rect x="8" y="14" width="1" height="1" fill="#fff" opacity=".7"/><rect x="10" y="1" width="1" height="1" fill="#9c9a9c"/><rect x="11" y="2" width="1" height="1" fill="#fff" opacity=".7"/><rect x="10" y="4" width="1" height="1" fill="#9c9a9c"/><rect x="11" y="5" width="1" height="1" fill="#fff" opacity=".7"/><rect x="10" y="7" width="1" height="1" fill="#9c9a9c"/><rect x="11" y="8" width="1" height="1" fill="#fff" opacity=".7"/><rect x="10" y="10" width="1" height="1" fill="#9c9a9c"/><rect x="11" y="11" width="1" height="1" fill="#fff" opacity=".7"/><rect x="10" y="13" width="1" height="1" fill="#9c9a9c"/><rect x="11" y="14" width="1" height="1" fill="#fff" opacity=".7"/><rect x="13" y="1" width="1" height="1" fill="#9c9a9c"/><rect x="14" y="2" width="1" height="1" fill="#fff" opacity=".7"/><rect x="13" y="4" width="1" height="1" fill="#9c9a9c"/><rect x="14" y="5" width="1" height="1" fill="#fff" opacity=".7"/><rect x="13" y="7" width="1" height="1" fill="#9c9a9c"/><rect x="14" y="8" width="1" height="1" fill="#fff" opacity=".7"/><rect x="13" y="10" width="1" height="1" fill="#9c9a9c"/><rect x="14" y="11" width="1" height="1" fill="#fff" opacity=".7"/><rect x="13" y="13" width="1" height="1" fill="#9c9a9c"/><rect x="14" y="14" width="1" height="1" fill="#fff" opacity=".7"/></svg><div class="chk tbpress" style="left:140px;top:73px;width:23px;height:22px;"></div><svg class="ic" width="16" height="16" viewBox="0 0 16 16" shape-rendering="crispEdges" style="left:144px;top:76px"><g shape-rendering="auto"><path d="M5 1.500h7q3 0 3 2.500t-3 2.500h-.5v3.500l-3-3.500h-3.500q-3 0-3-2.500t3-2.500z" fill="#fff" stroke="#000" stroke-width=".9"/><path d="M6.500 3l1 2 1-1.500 1 1.500 1-2" fill="none" stroke="#000" stroke-width=".9"/><path d="M2.500 9.500h8l1.500 2-1.500 2.500h-8q-1.500-.5-1.500-2.250t1.500-2.250z" fill="#ffff84" stroke="#848200"/><path d="M10 12l1.500 1 2.500-3" fill="none" stroke="#000"/></g></svg><svg class="ic" width="16" height="16" viewBox="0 0 16 16" shape-rendering="crispEdges" style="left:167px;top:76px"><path d="M2.500 1l1.500 1.500-1.500 1.500-1.500-1.500z" fill="#000080"/><path d="M6 2.5h9" stroke="#848284" stroke-width="1.500"/><path d="M7 3.8h7" stroke="#fff" stroke-dasharray="1 1"/><path d="M2.500 6l1.500 1.500-1.500 1.500-1.500-1.500z" fill="#000080"/><path d="M6 7.5h9" stroke="#848284" stroke-width="1.500"/><path d="M7 8.8h7" stroke="#fff" stroke-dasharray="1 1"/><path d="M2.500 11l1.500 1.500-1.500 1.500-1.500-1.500z" fill="#000080"/><path d="M6 12.5h9" stroke="#848284" stroke-width="1.500"/><path d="M7 13.8h7" stroke="#fff" stroke-dasharray="1 1"/></svg><svg class="ic" width="16" height="16" viewBox="0 0 16 16" shape-rendering="crispEdges" style="left:190px;top:76px"><g class="w" transform="translate(1,1)"><path class="f" d="M1 1h2v14h-2z"/><path class="f" d="M13 1h2v14h-2z"/><path class="f" d="M3 4h3v2h-3z"/><path class="f" d="M6 2h1v6h-1z"/><path class="f" d="M8 2h1v6h-1z"/><path class="f" d="M9 4h4v2h-4z"/><path class="f" d="M3 10h3v2h-3z"/><path class="s" d="M8 9.500a1.500 1.500 0 1 1-.1 0"/><path class="f" d="M10 10h3v2h-3z"/></g><g class="g"><path class="f" d="M1 1h2v14h-2z"/><path class="f" d="M13 1h2v14h-2z"/><path class="f" d="M3 4h3v2h-3z"/><path class="f" d="M6 2h1v6h-1z"/><path class="f" d="M8 2h1v6h-1z"/><path class="f" d="M9 4h4v2h-4z"/><path class="f" d="M3 10h3v2h-3z"/><path class="s" d="M8 9.500a1.500 1.500 0 1 1-.1 0"/><path class="f" d="M10 10h3v2h-3z"/></g></svg><div class="chk tbpress" style="left:209px;top:73px;width:23px;height:22px;"></div><svg class="ic" width="16" height="16" viewBox="0 0 16 16" shape-rendering="crispEdges" style="left:213px;top:76px"><rect x="1" y="1" width="2" height="14" fill="#008200"/><rect x="4" y="1" width="12" height="14" fill="#ffff00"/><path d="M4 5.500h12M4 10.500h12" stroke="#d6d3ce"/><g fill="none" stroke="#000" shape-rendering="auto" stroke-width=".8"><path d="M6.500 1.500h-2v3.500h2M13.500 1.500h2v3.500h-2M6.500 6.500h-2v3.500h2M13.500 6.500h2v3.500h-2M6.500 11.500h-2v3h2M13.500 11.500h2v3h-2"/><path d="M6.500 3h7M6.500 8h7M6.500 13h7" stroke-dasharray="1 1"/></g></svg><svg class="ic" width="16" height="16" viewBox="0 0 16 16" shape-rendering="crispEdges" style="left:236px;top:76px"><g class="w" transform="translate(1,1)"><path class="f" d="M0 1h8v3h-8z"/><path class="f" d="M2 4h2v10h-2z"/><path class="f" d="M4 7h3v2h-3z"/><path class="f" d="M7 6h8v3h-8z"/><path class="f" d="M4 12h3v2h-3z"/><path class="f" d="M7 11h8v3h-8z"/></g><g class="g"><path class="f" d="M0 1h8v3h-8z"/><path class="f" d="M2 4h2v10h-2z"/><path class="f" d="M4 7h3v2h-3z"/><path class="f" d="M7 6h8v3h-8z"/><path class="f" d="M4 12h3v2h-3z"/><path class="f" d="M7 11h8v3h-8z"/></g></svg><div class="sepv" style="left:260px;top:73px;width:2px;height:22px;"></div><svg class="ic" width="16" height="16" viewBox="0 0 16 16" shape-rendering="crispEdges" style="left:266px;top:76px"><g class="w" transform="translate(1,1)"><path class="s" d="M3.500 1.500v10l2.500-2.500 2 4.500h1.500l-2-4.500h3.500z"/></g><g class="g"><path class="s" d="M3.500 1.500v10l2.500-2.500 2 4.500h1.500l-2-4.500h3.500z"/></g></svg><svg class="ic" width="16" height="16" viewBox="0 0 16 16" shape-rendering="crispEdges" style="left:289px;top:76px"><g class="w" transform="translate(1,1)"><path class="f" d="M1 7h4v2h-4z"/><path class="f" d="M5 3h2v10h-2z"/><path class="f" d="M10 3h2v10h-2z"/><path class="f" d="M12 7h4v2h-4z"/></g><g class="g"><path class="f" d="M1 7h4v2h-4z"/><path class="f" d="M5 3h2v10h-2z"/><path class="f" d="M10 3h2v10h-2z"/><path class="f" d="M12 7h4v2h-4z"/></g></svg><svg class="ic" width="16" height="16" viewBox="0 0 16 16" shape-rendering="crispEdges" style="left:312px;top:76px"><g class="w" transform="translate(1,1)"><path class="f" d="M0 7h4v2h-4z"/><path class="f" d="M4 3h2v10h-2z"/><path class="f" d="M10 3h2v10h-2z"/><path class="f" d="M12 7h4v2h-4z"/><path class="f" d="M4 12l7-9h2l-7 9z"/></g><g class="g"><path class="f" d="M0 7h4v2h-4z"/><path class="f" d="M4 3h2v10h-2z"/><path class="f" d="M10 3h2v10h-2z"/><path class="f" d="M12 7h4v2h-4z"/><path class="f" d="M4 12l7-9h2l-7 9z"/></g></svg><svg class="ic" width="16" height="16" viewBox="0 0 16 16" shape-rendering="crispEdges" style="left:335px;top:76px"><g class="w" transform="translate(1,1)"><path class="f" d="M1 2h2v6h-2z"/><path class="f" d="M3 6h2v2h-2z"/><path class="f" d="M5 2h2v11h-2z"/><path class="f" d="M10 2h2v11h-2z"/><path class="f" d="M12 6h2v2h-2z"/><path class="f" d="M14 2h2v6h-2z"/></g><g class="g"><path class="f" d="M1 2h2v6h-2z"/><path class="f" d="M3 6h2v2h-2z"/><path class="f" d="M5 2h2v11h-2z"/><path class="f" d="M10 2h2v11h-2z"/><path class="f" d="M12 6h2v2h-2z"/><path class="f" d="M14 2h2v6h-2z"/></g></svg><svg class="ic" width="16" height="16" viewBox="0 0 16 16" shape-rendering="crispEdges" style="left:358px;top:76px"><g class="w" transform="translate(1,1)"><path class="f" d="M0 2h2v6h-2z"/><path class="f" d="M2 6h2v2h-2z"/><path class="f" d="M4 2h2v11h-2z"/><path class="f" d="M10 2h2v11h-2z"/><path class="f" d="M12 6h2v2h-2z"/><path class="f" d="M14 2h2v6h-2z"/><path class="f" d="M4 12l7-10h2l-7 10z"/></g><g class="g"><path class="f" d="M0 2h2v6h-2z"/><path class="f" d="M2 6h2v2h-2z"/><path class="f" d="M4 2h2v11h-2z"/><path class="f" d="M10 2h2v11h-2z"/><path class="f" d="M12 6h2v2h-2z"/><path class="f" d="M14 2h2v6h-2z"/><path class="f" d="M4 12l7-10h2l-7 10z"/></g></svg><svg class="ic" width="16" height="16" viewBox="0 0 16 16" shape-rendering="crispEdges" style="left:382px;top:76px"><g class="w" transform="translate(1,1)"><path class="f" d="M7 1h2v13h-2z"/></g><g class="g"><path class="f" d="M7 1h2v13h-2z"/></g></svg><svg class="ic" width="16" height="16" viewBox="0 0 16 16" shape-rendering="crispEdges" style="left:405px;top:76px"><g class="w" transform="translate(1,1)"><path class="f" d="M0 7h16v2h-16z"/></g><g class="g"><path class="f" d="M0 7h16v2h-16z"/></g></svg><svg class="ic" width="16" height="16" viewBox="0 0 16 16" shape-rendering="crispEdges" style="left:428px;top:76px"><g class="w" transform="translate(1,1)"><path class="f" d="M0 7h3v2h-3z"/><path class="f" d="M13 7h3v2h-3z"/><path class="s" stroke-width="1.500" d="M8 3a5 5 0 1 1-.1 0"/></g><g class="g"><path class="f" d="M0 7h3v2h-3z"/><path class="f" d="M13 7h3v2h-3z"/><path class="s" stroke-width="1.500" d="M8 3a5 5 0 1 1-.1 0"/></g></svg><svg class="ic" width="16" height="16" viewBox="0 0 16 16" shape-rendering="crispEdges" style="left:451px;top:76px"><g class="w" transform="translate(1,1)"><path class="f" d="M0 7h3v2h-3z"/><path class="f" d="M13 7h3v2h-3z"/><path class="s" stroke-width="1.500" d="M8 3a5 5 0 1 1-.1 0M3 14l10-12"/></g><g class="g"><path class="f" d="M0 7h3v2h-3z"/><path class="f" d="M13 7h3v2h-3z"/><path class="s" stroke-width="1.500" d="M8 3a5 5 0 1 1-.1 0M3 14l10-12"/></g></svg><svg class="ic" width="16" height="16" viewBox="0 0 16 16" shape-rendering="crispEdges" style="left:474px;top:76px"><g class="w" transform="translate(1,1)"><path class="f" d="M0 4h4v2h-4z"/><path class="f" d="M12 4h4v2h-4z"/><path class="s" d="M4.500 1.500h7v12h-7zM4.500 5.500h7M4.500 9.500h7"/></g><g class="g"><path class="f" d="M0 4h4v2h-4z"/><path class="f" d="M12 4h4v2h-4z"/><path class="s" d="M4.500 1.500h7v12h-7zM4.500 5.500h7M4.500 9.500h7"/></g></svg><svg class="ic" width="16" height="16" viewBox="0 0 16 16" shape-rendering="crispEdges" style="left:497px;top:76px"><g class="w" transform="translate(1,1)"><path class="f" d="M0 3h4v2h-4z"/><path class="f" d="M0 8h4v1h-4z"/><path class="f" d="M12 3h4v2h-4z"/><path class="f" d="M12 8h4v1h-4z"/><path class="s" d="M4.500 1.500h7v12h-7zM4.500 5.500h7M4.500 9.500h7M1 8.500l2 4h2"/></g><g class="g"><path class="f" d="M0 3h4v2h-4z"/><path class="f" d="M0 8h4v1h-4z"/><path class="f" d="M12 3h4v2h-4z"/><path class="f" d="M12 8h4v1h-4z"/><path class="s" d="M4.500 1.500h7v12h-7zM4.500 5.500h7M4.500 9.500h7M1 8.500l2 4h2"/></g></svg><svg class="ic" width="16" height="16" viewBox="0 0 16 16" shape-rendering="crispEdges" style="left:520px;top:76px"><g class="w" transform="translate(1,1)"><path class="f" d="M0 4h16v2h-16z"/><path class="f" d="M8 2h2v12h-2z"/><path class="f" d="M10 2h5v2h-5z"/><path class="f" d="M10 12h5v2h-5z"/><path class="f" d="M3 7l4 3-4 3z"/></g><g class="g"><path class="f" d="M0 4h16v2h-16z"/><path class="f" d="M8 2h2v12h-2z"/><path class="f" d="M10 2h5v2h-5z"/><path class="f" d="M10 12h5v2h-5z"/><path class="f" d="M3 7l4 3-4 3z"/></g></svg><svg class="ic" width="16" height="16" viewBox="0 0 16 16" shape-rendering="crispEdges" style="left:543px;top:76px"><g class="w" transform="translate(1,1)"><path class="f" d="M1 1h2v10h-2z"/><path class="f" d="M1 9h14v2h-14z"/></g><g class="g"><path class="f" d="M1 1h2v10h-2z"/><path class="f" d="M1 9h14v2h-14z"/></g></svg><svg class="ic" width="16" height="16" viewBox="0 0 16 16" shape-rendering="crispEdges" style="left:566px;top:76px"><g class="w" transform="translate(1,1)"><path class="f" d="M2 1h2v12h-2z"/><path class="f" d="M3 7l9-5h3l-10 6 9 6h-3z"/><path class="f" d="M2 9h13v2h-13z"/></g><g class="g"><path class="f" d="M2 1h2v12h-2z"/><path class="f" d="M3 7l9-5h3l-10 6 9 6h-3z"/><path class="f" d="M2 9h13v2h-13z"/></g></svg><svg class="ic" width="16" height="16" viewBox="0 0 16 16" shape-rendering="crispEdges" style="left:608px;top:76px"><g class="w" transform="translate(1,1)"><path class="s" d="M2.500 1.500h9v8h-9z"/><path class="f" d="M8 1h6v1h1v2h-1v2h1v2h-2v1h-3V8H8z"/><path class="s" d="M2 11q-1.5 1.5 0 3.5M4 11q1.5 1.500 0 3.5M2.2 14.2l1.500 -3M6.5 11q-1.5 1.5 0 3.5M8.5 11q1.5 1.500 0 3.5M6.7 14.2l1.500 -3M11 11q-1.5 1.5 0 3.5M13 11q1.5 1.500 0 3.5M11.2 14.2l1.500 -3"/></g><g class="g"><path class="s" d="M2.500 1.500h9v8h-9z"/><path class="f" d="M8 1h6v1h1v2h-1v2h1v2h-2v1h-3V8H8z"/><path class="s" d="M2 11q-1.5 1.5 0 3.5M4 11q1.5 1.500 0 3.5M2.2 14.2l1.500 -3M6.5 11q-1.5 1.5 0 3.5M8.5 11q1.5 1.500 0 3.5M6.7 14.2l1.500 -3M11 11q-1.5 1.5 0 3.5M13 11q1.5 1.500 0 3.5M11.2 14.2l1.500 -3"/></g></svg><div class="sepv" style="left:632px;top:73px;width:2px;height:22px;"></div><svg class="ic" width="16" height="16" viewBox="0 0 16 16" shape-rendering="crispEdges" style="left:639px;top:76px"><g class="w" transform="translate(1,1)"><path class="s" d="M1.500 7l5-3.500h3.500l5 3.500-7 4zM1.500 9.500l6.500 4 7-4M1.500 12l6.500 3.500 7-4"/><path class="f" d="M7 1h2v4h-2z"/><path class="f" d="M5 5h6l-3 3z"/></g><g class="g"><path class="s" d="M1.500 7l5-3.500h3.500l5 3.500-7 4zM1.500 9.500l6.500 4 7-4M1.500 12l6.500 3.500 7-4"/><path class="f" d="M7 1h2v4h-2z"/><path class="f" d="M5 5h6l-3 3z"/></g></svg><svg class="ic" width="16" height="16" viewBox="0 0 16 16" shape-rendering="crispEdges" style="left:662px;top:76px"><g class="w" transform="translate(1,1)"><path class="s" d="M1.500 6.500h13v8h-13zM1.500 9.500h13M1.500 12h13M4.500 7v7M7.500 7v7M10.500 7v7"/><path class="s" stroke-dasharray="1 1" d="M2 1.500h13M2 3.500h13"/><path class="f" d="M5 1h1v4h-1z"/><path class="f" d="M3 4h5l-2.500 3z"/><path class="f" d="M11 1h1v4h-1z"/><path class="f" d="M9 4h5l-2.500 3z"/></g><g class="g"><path class="s" d="M1.500 6.500h13v8h-13zM1.500 9.500h13M1.500 12h13M4.500 7v7M7.500 7v7M10.500 7v7"/><path class="s" stroke-dasharray="1 1" d="M2 1.500h13M2 3.500h13"/><path class="f" d="M5 1h1v4h-1z"/><path class="f" d="M3 4h5l-2.500 3z"/><path class="f" d="M11 1h1v4h-1z"/><path class="f" d="M9 4h5l-2.500 3z"/></g></svg><div class="sepv" style="left:685px;top:73px;width:2px;height:22px;"></div><svg class="ic" width="16" height="16" viewBox="0 0 16 16" shape-rendering="crispEdges" style="left:693px;top:76px"><g class="w" transform="translate(1,1)"><path class="f" d="M1 5a2.500 3 0 0 1 5 0v2h1v1H0V7h1z"/><path class="s" d="M7.5 4.5h8v10h-8z"/><path class="s" d="M9.500 6.500h4l-4 5h4"/><path class="f" d="M3 8h4v1h-4z"/></g><g class="g"><path class="f" d="M1 5a2.500 3 0 0 1 5 0v2h1v1H0V7h1z"/><path class="s" d="M7.5 4.5h8v10h-8z"/><path class="s" d="M9.500 6.500h4l-4 5h4"/><path class="f" d="M3 8h4v1h-4z"/></g></svg><svg class="ic" width="16" height="16" viewBox="0 0 16 16" shape-rendering="crispEdges" style="left:716px;top:76px"><g class="w" transform="translate(1,1)"><path class="f" d="M1 5a2.500 3 0 0 1 5 0v2h1v1H0V7h1z"/><path class="s" d="M7.5 4.5h8v10h-8z"/><path class="s" d="M9.500 6.500l4 5M13.500 6.500l-4 5"/><path class="f" d="M3 8h4v1h-4z"/></g><g class="g"><path class="f" d="M1 5a2.500 3 0 0 1 5 0v2h1v1H0V7h1z"/><path class="s" d="M7.5 4.5h8v10h-8z"/><path class="s" d="M9.500 6.500l4 5M13.500 6.500l-4 5"/><path class="f" d="M3 8h4v1h-4z"/></g></svg><svg class="ic" width="16" height="16" viewBox="0 0 16 16" shape-rendering="crispEdges" style="left:739px;top:76px"><g class="w" transform="translate(1,1)"><path class="f" d="M1 5a2.500 3 0 0 1 5 0v2h1v1H0V7h1z"/><path class="s" d="M7.5 4.5h8v10h-8z"/><path class="s" d="M9.500 9.500l1.500 2 2.500-5"/><path class="f" d="M2 8h1v4h-1z"/><path class="f" d="M0 11h5l-2.500 3z"/></g><g class="g"><path class="f" d="M1 5a2.500 3 0 0 1 5 0v2h1v1H0V7h1z"/><path class="s" d="M7.5 4.5h8v10h-8z"/><path class="s" d="M9.500 9.500l1.500 2 2.500-5"/><path class="f" d="M2 8h1v4h-1z"/><path class="f" d="M0 11h5l-2.500 3z"/></g></svg><svg class="ic" width="16" height="16" viewBox="0 0 16 16" shape-rendering="crispEdges" style="left:762px;top:76px"><g class="w" transform="translate(1,1)"><path class="f" d="M1 5a2.500 3 0 0 1 5 0v2h1v1H0V7h1z"/><path class="s" d="M7.5 4.5h8v10h-8z"/><path class="f" d="M10 9h3v2h-3z"/><path class="f" d="M1 10h4v1h-4z"/><path class="f" d="M5 8l3 2.500-3 2.500z"/></g><g class="g"><path class="f" d="M1 5a2.500 3 0 0 1 5 0v2h1v1H0V7h1z"/><path class="s" d="M7.5 4.5h8v10h-8z"/><path class="f" d="M10 9h3v2h-3z"/><path class="f" d="M1 10h4v1h-4z"/><path class="f" d="M5 8l3 2.500-3 2.500z"/></g></svg><div class="sepv" style="left:785px;top:73px;width:2px;height:22px;"></div><svg class="ic" width="16" height="16" viewBox="0 0 16 16" shape-rendering="crispEdges" style="left:793px;top:76px"><g class="w" transform="translate(1,1)"><path class="f" d="M1 1h5v14h-5z"/><path class="f" d="M8 1h1v14h-1z"/><path class="f" d="M10 1h5v4h-5z"/><path class="f" d="M10 6h5v4h-5z"/><path class="f" d="M10 11h5v4h-5z"/></g><g class="g"><path class="f" d="M1 1h5v14h-5z"/><path class="f" d="M8 1h1v14h-1z"/><path class="f" d="M10 1h5v4h-5z"/><path class="f" d="M10 6h5v4h-5z"/><path class="f" d="M10 11h5v4h-5z"/></g><path class="e" d="M3 3h1v1h-1z"/><path class="e" d="M3 6h1v1h-1z"/><path class="e" d="M3 9h1v1h-1z"/><path class="e" d="M3 12h1v1h-1z"/></svg><div class="sepv" style="left:816px;top:73px;width:2px;height:22px;"></div><svg class="ic" width="16" height="16" viewBox="0 0 16 16" shape-rendering="crispEdges" style="left:823px;top:76px"><g class="w" transform="translate(1,1)"><path class="f" d="M1 1h14v8h-14z"/><path class="s" d="M2 11q-1.5 1.5 0 3.5M4 11q1.5 1.500 0 3.5M2.2 14.2l1.500 -3M6.5 11q-1.5 1.5 0 3.5M8.5 11q1.5 1.500 0 3.5M6.7 14.2l1.500 -3M11 11q-1.5 1.5 0 3.5M13 11q1.5 1.500 0 3.5M11.2 14.2l1.500 -3"/></g><g class="g"><path class="f" d="M1 1h14v8h-14z"/><path class="s" d="M2 11q-1.5 1.5 0 3.5M4 11q1.5 1.500 0 3.5M2.2 14.2l1.500 -3M6.5 11q-1.5 1.5 0 3.5M8.5 11q1.5 1.500 0 3.5M6.7 14.2l1.500 -3M11 11q-1.5 1.5 0 3.5M13 11q1.5 1.500 0 3.5M11.2 14.2l1.500 -3"/></g></svg><svg class="ic" width="16" height="16" viewBox="0 0 16 16" shape-rendering="crispEdges" style="left:846px;top:76px"><g class="w" transform="translate(1,1)"><path class="f" d="M0 1h14v2H5v10H2v1H0z"/><path class="s" d="M6.5 4.5h9v10h-9z"/><path class="s" d="M8.500 6.500h5l-5 5h5"/></g><g class="g"><path class="f" d="M0 1h14v2H5v10H2v1H0z"/><path class="s" d="M6.5 4.5h9v10h-9z"/><path class="s" d="M8.500 6.500h5l-5 5h5"/></g></svg><svg class="ic" width="16" height="16" viewBox="0 0 16 16" shape-rendering="crispEdges" style="left:869px;top:76px"><g class="w" transform="translate(1,1)"><path class="f" d="M0 1h14v2H5v10H2v1H0z"/><path class="s" d="M6.5 4.5h9v10h-9z"/><path class="s" d="M8.500 6.500l5 5M13.500 6.500l-5 5"/></g><g class="g"><path class="f" d="M0 1h14v2H5v10H2v1H0z"/><path class="s" d="M6.5 4.5h9v10h-9z"/><path class="s" d="M8.500 6.500l5 5M13.500 6.500l-5 5"/></g></svg><svg class="ic" width="16" height="16" viewBox="0 0 16 16" shape-rendering="crispEdges" style="left:892px;top:76px"><g class="w" transform="translate(1,1)"><path class="f" d="M0 1h14v2H5v10H2v1H0z"/><path class="s" d="M6.5 4.5h9v10h-9z"/><path class="s" d="M8.500 9.500l2 2 3-6"/></g><g class="g"><path class="f" d="M0 1h14v2H5v10H2v1H0z"/><path class="s" d="M6.5 4.5h9v10h-9z"/><path class="s" d="M8.500 9.500l2 2 3-6"/></g></svg><svg class="ic" width="16" height="16" viewBox="0 0 16 16" shape-rendering="crispEdges" style="left:16px;top:106px"><g class="w" transform="translate(1,1)"><path class="s" d="M1.500 1.500h12v9h-12zM1.500 3.500h12M3.500 3.500v7"/><path class="f" d="M6 7h10v7h-10z"/></g><g class="g"><path class="s" d="M1.500 1.500h12v9h-12zM1.500 3.500h12M3.500 3.500v7"/><path class="f" d="M6 7h10v7h-10z"/></g><path fill="url(#ckw)" d="M7 9h8v3H7z"/></svg><svg class="ic" width="16" height="16" viewBox="0 0 16 16" shape-rendering="crispEdges" style="left:39px;top:106px"><rect x="0.500" y="0.500" width="14" height="12" fill="#fff" stroke="#000"/><rect x="1" y="1" width="13" height="2" fill="#000080"/><path d="M0 15l7-8" stroke="#000" stroke-width="2.500"/><path d="M4 5l3-2h3l3 4-1 2-3-3-2 1z" fill="#808000" stroke="#000" stroke-width=".7"/></svg><svg class="ic" width="16" height="16" viewBox="0 0 16 16" shape-rendering="crispEdges" style="left:62px;top:106px"><g class="w" transform="translate(1,1)"><path class="s" d="M2.500 1.500h12v9h-12zM2.500 3.500h12"/><path class="s" d="M5 9l4-4M6 5h3v3M10 6h3M10 8h3"/><path class="s" d="M3 11.500a1.500 1.500 0 1 1-.1 0M8 11.500a1.500 1.500 0 1 1-.1 0"/><path class="s" d="M1 14l3-3M6 14l3-3"/></g><g class="g"><path class="s" d="M2.500 1.500h12v9h-12zM2.500 3.500h12"/><path class="s" d="M5 9l4-4M6 5h3v3M10 6h3M10 8h3"/><path class="s" d="M3 11.500a1.500 1.500 0 1 1-.1 0M8 11.500a1.500 1.500 0 1 1-.1 0"/><path class="s" d="M1 14l3-3M6 14l3-3"/></g></svg><svg class="ic" width="16" height="16" viewBox="0 0 16 16" shape-rendering="crispEdges" style="left:85px;top:106px"><g class="w" transform="translate(1,1)"><path class="s" d="M2.500 1.500h12v9h-12zM2.500 3.500h12"/><path class="s" d="M6 8q2-3 5-1M9 5l2 2"/><path class="s" d="M0.500 10.500h4v4h-4zM10.500 10.500h4v4h-4z"/><path class="f" d="M1 9h3v1h-3z"/><path class="f" d="M11 9h3v1h-3z"/></g><g class="g"><path class="s" d="M2.500 1.500h12v9h-12zM2.500 3.500h12"/><path class="s" d="M6 8q2-3 5-1M9 5l2 2"/><path class="s" d="M0.500 10.500h4v4h-4zM10.500 10.500h4v4h-4z"/><path class="f" d="M1 9h3v1h-3z"/><path class="f" d="M11 9h3v1h-3z"/></g></svg><svg class="ic" width="16" height="16" viewBox="0 0 16 16" shape-rendering="crispEdges" style="left:108px;top:106px"><g class="w" transform="translate(1,1)"><path class="s" d="M3.500 1.500h12v9h-12zM3.500 3.500h12M6.500 3.500v7"/><path class="s" d="M1.500 9.500h3v5h-3z"/><path class="f" d="M0 11h1v2h-1z"/></g><g class="g"><path class="s" d="M3.500 1.500h12v9h-12zM3.500 3.500h12M6.500 3.500v7"/><path class="s" d="M1.500 9.500h3v5h-3z"/><path class="f" d="M0 11h1v2h-1z"/></g></svg><svg class="ic" width="16" height="16" viewBox="0 0 16 16" shape-rendering="crispEdges" style="left:131px;top:106px"><path d="M1.500 5.500l5-4 3 3v9h-8z" fill="#fff" stroke="#000"/><path d="M1.500 6.500h8" stroke="#000"/><path d="M3 8.500h5M3 10.500h5M3 12.500h2" stroke="#000"/><path d="M4 4l3-2 2 2" stroke="#848284" fill="none" stroke-dasharray="1 1"/><path d="M9 2.500h3" stroke="#848284"/><path d="M12 0l4 3-4 3z" fill="#000080"/><path d="M14.500 0v7" stroke="#000080"/></svg><div class="sepv" style="left:155px;top:103px;width:2px;height:22px;"></div><svg class="ic" width="16" height="16" viewBox="0 0 16 16" shape-rendering="crispEdges" style="left:162px;top:106px"><g class="w" transform="translate(1,1)"><path class="s" d="M1.500 8.500l2-2h2v7h-4zM9.500 8.500l2-2h2v7h-4z"/><path class="s" d="M4 1l7 6M11 1l-7 6M3 1.500h2M10 1.500h2"/></g><g class="g"><path class="s" d="M1.500 8.500l2-2h2v7h-4zM9.500 8.500l2-2h2v7h-4z"/><path class="s" d="M4 1l7 6M11 1l-7 6M3 1.500h2M10 1.500h2"/></g></svg><svg class="ic" width="16" height="16" viewBox="0 0 16 16" shape-rendering="crispEdges" style="left:185px;top:106px"><g class="w" transform="translate(1,1)"><path class="f" d="M2 1h11l2 2-1 2H2z"/><path class="s" d="M13 5.500q2 2-1 3H4q-3 1-1 3M3.500 8.500v2M7.500 8.500v2M11.500 8.500v2M1 13.500h2M5 13.500h2M9 13.500h2M13 13.500h2"/></g><g class="g"><path class="f" d="M2 1h11l2 2-1 2H2z"/><path class="s" d="M13 5.500q2 2-1 3H4q-3 1-1 3M3.500 8.500v2M7.500 8.500v2M11.500 8.500v2M1 13.500h2M5 13.500h2M9 13.500h2M13 13.500h2"/></g><path fill="url(#ckw)" d="M3 2h9v2H3z"/></svg><svg class="ic" width="16" height="16" viewBox="0 0 16 16" shape-rendering="crispEdges" style="left:208px;top:106px"><g class="w" transform="translate(1,1)"><path class="s" d="M1.500 1.500h13v9l-3 3h-4v-2h-3v3h-3zM4.500 1.500v10M7.500 1.500v5h4v-5M4.500 6.500h3"/></g><g class="g"><path class="s" d="M1.500 1.500h13v9l-3 3h-4v-2h-3v3h-3zM4.500 1.500v10M7.500 1.500v5h4v-5M4.500 6.500h3"/></g></svg><svg class="ic" width="16" height="16" viewBox="0 0 16 16" shape-rendering="crispEdges" style="left:231px;top:106px"><g class="w" transform="translate(1,1)"><path class="s" d="M1.500 1.500h13v13h-13zM1.500 4.500h13M4 7.500h8M4 9.500h8M1.500 11.500h13M6.500 11.500v3M10.500 11.500v3"/></g><g class="g"><path class="s" d="M1.500 1.500h13v13h-13zM1.500 4.500h13M4 7.500h8M4 9.500h8M1.500 11.500h13M6.500 11.500v3M10.500 11.500v3"/></g></svg><svg class="ic" width="16" height="16" viewBox="0 0 16 16" shape-rendering="crispEdges" style="left:254px;top:106px"><g class="w" transform="translate(1,1)"><path class="s" d="M1.500 1.500h13v13h-13zM1.500 4.500h13M9.500 1.500v3"/><path class="s" d="M3.500 6.500h2v2h-2zM7 6.500h2v2H7zM11.500 6v3M3.500 10.500h2v2h-2zM7 10.500h2v2H7zM10.500 10.500h2v1h-2v1.500h2.500"/></g><g class="g"><path class="s" d="M1.500 1.500h13v13h-13zM1.500 4.500h13M9.500 1.500v3"/><path class="s" d="M3.500 6.500h2v2h-2zM7 6.500h2v2H7zM11.500 6v3M3.500 10.500h2v2h-2zM7 10.500h2v2H7zM10.500 10.500h2v1h-2v1.500h2.500"/></g></svg><div class="sepv" style="left:278px;top:103px;width:2px;height:22px;"></div><svg class="ic" width="16" height="16" viewBox="0 0 16 16" shape-rendering="crispEdges" style="left:285px;top:106px"><g class="w" transform="translate(1,1)"><text class="f" x="8" y="9" text-anchor="middle" style="font:bold 12px 'Liberation Serif',serif">10</text><path class="s" d="M2 11q-1.5 1.5 0 3.5M4 11q1.5 1.500 0 3.5M2.2 14.2l1.500 -3M6.5 11q-1.5 1.5 0 3.5M8.5 11q1.5 1.500 0 3.5M6.7 14.2l1.500 -3M11 11q-1.5 1.5 0 3.5M13 11q1.5 1.500 0 3.5M11.2 14.2l1.500 -3"/></g><g class="g"><text class="f" x="8" y="9" text-anchor="middle" style="font:bold 12px 'Liberation Serif',serif">10</text><path class="s" d="M2 11q-1.5 1.5 0 3.5M4 11q1.5 1.500 0 3.5M2.2 14.2l1.500 -3M6.5 11q-1.5 1.5 0 3.5M8.5 11q1.5 1.500 0 3.5M6.7 14.2l1.500 -3M11 11q-1.5 1.5 0 3.5M13 11q1.5 1.500 0 3.5M11.2 14.2l1.500 -3"/></g></svg><svg class="ic" width="16" height="16" viewBox="0 0 16 16" shape-rendering="crispEdges" style="left:308px;top:106px"><g class="w" transform="translate(1,1)"><text class="f" x="8" y="9" text-anchor="middle" style="font:bold 12px 'Liberation Serif',serif">10</text><path class="f" d="M2 7h9v2h-9z"/><path class="f" d="M11 5l4 3-4 3z"/><path class="s" d="M2 11q-1.5 1.5 0 3.5M4 11q1.5 1.500 0 3.5M2.2 14.2l1.500 -3M6.5 11q-1.5 1.5 0 3.5M8.5 11q1.5 1.500 0 3.5M6.7 14.2l1.500 -3M11 11q-1.5 1.5 0 3.5M13 11q1.5 1.500 0 3.5M11.2 14.2l1.500 -3"/></g><g class="g"><text class="f" x="8" y="9" text-anchor="middle" style="font:bold 12px 'Liberation Serif',serif">10</text><path class="f" d="M2 7h9v2h-9z"/><path class="f" d="M11 5l4 3-4 3z"/><path class="s" d="M2 11q-1.5 1.5 0 3.5M4 11q1.5 1.500 0 3.5M2.2 14.2l1.500 -3M6.5 11q-1.5 1.5 0 3.5M8.5 11q1.5 1.500 0 3.5M6.7 14.2l1.500 -3M11 11q-1.5 1.5 0 3.5M13 11q1.5 1.500 0 3.5M11.2 14.2l1.500 -3"/></g></svg><svg class="ic" width="16" height="16" viewBox="0 0 16 16" shape-rendering="crispEdges" style="left:331px;top:106px"><g class="w" transform="translate(1,1)"><text class="f" x="8" y="9" text-anchor="middle" style="font:bold 12px 'Liberation Serif',serif">16</text><path class="s" d="M2 11q-1.5 1.5 0 3.5M4 11q1.5 1.500 0 3.5M2.2 14.2l1.500 -3M6.5 11q-1.5 1.5 0 3.5M8.5 11q1.5 1.500 0 3.5M6.7 14.2l1.500 -3M11 11q-1.5 1.5 0 3.5M13 11q1.5 1.500 0 3.5M11.2 14.2l1.500 -3"/></g><g class="g"><text class="f" x="8" y="9" text-anchor="middle" style="font:bold 12px 'Liberation Serif',serif">16</text><path class="s" d="M2 11q-1.5 1.5 0 3.5M4 11q1.5 1.500 0 3.5M2.2 14.2l1.500 -3M6.5 11q-1.5 1.5 0 3.5M8.5 11q1.5 1.500 0 3.5M6.7 14.2l1.500 -3M11 11q-1.5 1.5 0 3.5M13 11q1.5 1.500 0 3.5M11.2 14.2l1.500 -3"/></g></svg><div class="sepv" style="left:355px;top:103px;width:2px;height:22px;"></div><svg class="ic" width="16" height="16" viewBox="0 0 16 16" shape-rendering="crispEdges" style="left:363px;top:106px"><g class="w" transform="translate(1,1)"><path class="f" d="M8 1l6 5h-2v2h3v1h-3v2h3v1h-3v2H4V6H2z"/></g><g class="g"><path class="f" d="M8 1l6 5h-2v2h3v1h-3v2h3v1h-3v2H4V6H2z"/></g></svg><svg class="ic" width="16" height="16" viewBox="0 0 16 16" shape-rendering="crispEdges" style="left:386px;top:106px"><g class="w" transform="translate(1,1)"><path class="f" d="M1 1h7v3l2-1v4h2V5l3 4-3 3V9h-2v5H4V9H2V7h1V4H1z"/></g><g class="g"><path class="f" d="M1 1h7v3l2-1v4h2V5l3 4-3 3V9h-2v5H4V9H2V7h1V4H1z"/></g></svg><svg class="ic" width="16" height="16" viewBox="0 0 16 16" shape-rendering="crispEdges" style="left:409px;top:106px"><g class="w" transform="translate(1,1)"><path class="k" d="M2 1h5v9H2z"/><path class="f" d="M8 1h5v2h2v4h-2v3H8V7H7V4h1z"/><path class="s" d="M0 4.500h3M0 7.500h3"/><path class="s" d="M2 11q-1.5 1.5 0 3.5M4 11q1.5 1.500 0 3.5M2.2 14.2l1.500 -3M6.5 11q-1.5 1.5 0 3.5M8.5 11q1.5 1.500 0 3.5M6.7 14.2l1.500 -3M11 11q-1.5 1.5 0 3.5M13 11q1.5 1.500 0 3.5M11.2 14.2l1.500 -3"/></g><g class="g"><path class="k" d="M2 1h5v9H2z"/><path class="f" d="M8 1h5v2h2v4h-2v3H8V7H7V4h1z"/><path class="s" d="M0 4.500h3M0 7.500h3"/><path class="s" d="M2 11q-1.5 1.5 0 3.5M4 11q1.5 1.500 0 3.5M2.2 14.2l1.500 -3M6.5 11q-1.5 1.5 0 3.5M8.5 11q1.5 1.500 0 3.5M6.7 14.2l1.500 -3M11 11q-1.5 1.5 0 3.5M13 11q1.5 1.500 0 3.5M11.2 14.2l1.500 -3"/></g></svg><svg class="ic" width="16" height="16" viewBox="0 0 16 16" shape-rendering="crispEdges" style="left:450px;top:106px"><g class="w" transform="translate(1,1)"><path class="f" d="M2 1h11l2 2v4l-1 1v5H4l-1-1V8H1V3z"/></g><g class="g"><path class="f" d="M2 1h11l2 2v4l-1 1v5H4l-1-1V8H1V3z"/></g><path class="e" d="M4 3h5v2h-5z"/><path class="e" d="M5 10h7v2h-7z"/><path d="M5 10h1v2H5z" fill="#848284"/></svg><svg class="ic" width="16" height="16" viewBox="0 0 16 16" shape-rendering="crispEdges" style="left:473px;top:106px"><g class="w" transform="translate(1,1)"><path class="f" d="M2 1h12l1 2v3l-2 1v4l1 1v2H4v-2l1-1V8H1V3z"/></g><g class="g"><path class="f" d="M2 1h12l1 2v3l-2 1v4l1 1v2H4v-2l1-1V8H1V3z"/></g><path class="e" d="M6 7h5v4h-5z"/><path d="M7 8h3v2H7z" fill="#848284"/><path class="e" d="M4 3h2v1h-2z"/><path class="e" d="M9 3h3v1h-3z"/></svg><div class="sepv" style="left:497px;top:103px;width:2px;height:22px;"></div><svg class="ic" width="16" height="16" viewBox="0 0 16 16" shape-rendering="crispEdges" style="left:504px;top:106px"><g class="w" transform="translate(1,1)"><path class="s" d="M1.500 1.500h11v9h-11zM1.500 4.500h11M3 6.500h6M3 8.500h4"/><path class="f" d="M8 6h7v6l-2 2h-3l-2-2z"/></g><g class="g"><path class="s" d="M1.500 1.500h11v9h-11zM1.500 4.500h11M3 6.500h6M3 8.500h4"/><path class="f" d="M8 6h7v6l-2 2h-3l-2-2z"/></g><path d="M10.500 9a1.500 1.500 0 1 1-.1 0M10 9.500l3 3M13 9.500l-3 3" stroke="#d6d3ce" fill="none"/></svg><div class="sepv" style="left:528px;top:103px;width:2px;height:22px;"></div><svg class="ic" width="16" height="16" viewBox="0 0 16 16" shape-rendering="crispEdges" style="left:535px;top:106px"><g class="w" transform="translate(1,1)"><path class="s" d="M4.500 9V3.500q1-1 1.500 0V7M6.500 7V2q1-1 1.500 0v5M8.500 7V2.500q1-1 1.500 0V7M10.500 7V4q1-1 1.500 0v6l-2 4H6L1.500 8.500q1-1.500 3 1"/><path class="f" d="M9 10h2v4h-2z"/><path class="f" d="M12 9h2v5h-2z"/></g><g class="g"><path class="s" d="M4.500 9V3.500q1-1 1.500 0V7M6.500 7V2q1-1 1.500 0v5M8.500 7V2.500q1-1 1.500 0V7M10.500 7V4q1-1 1.500 0v6l-2 4H6L1.500 8.500q1-1.500 3 1"/><path class="f" d="M9 10h2v4h-2z"/><path class="f" d="M12 9h2v5h-2z"/></g></svg><svg class="ic" width="16" height="16" viewBox="0 0 16 16" shape-rendering="crispEdges" style="left:558px;top:106px"><g class="w" transform="translate(1,1)"><path class="s" d="M4.500 9V3.500q1-1 1.500 0V7M6.500 7V2q1-1 1.500 0v5M8.500 7V2.500q1-1 1.500 0V7M10.500 7V4q1-1 1.500 0v6l-2 4H6L1.500 8.500q1-1.500 3 1"/><path class="f" d="M5 6h6v4l-1 2H7L5 9z"/><path class="f" d="M12 9h2v5h-2z"/></g><g class="g"><path class="s" d="M4.500 9V3.500q1-1 1.500 0V7M6.500 7V2q1-1 1.500 0v5M8.500 7V2.500q1-1 1.500 0V7M10.500 7V4q1-1 1.500 0v6l-2 4H6L1.500 8.500q1-1.500 3 1"/><path class="f" d="M5 6h6v4l-1 2H7L5 9z"/><path class="f" d="M12 9h2v5h-2z"/></g></svg><svg class="ic" width="16" height="16" viewBox="0 0 16 16" shape-rendering="crispEdges" style="left:581px;top:106px"><g class="w" transform="translate(1,1)"><path class="f" d="M3 1l11 6.500L3 14z"/></g><g class="g"><path class="f" d="M3 1l11 6.500L3 14z"/></g></svg><svg class="ic" width="16" height="16" viewBox="0 0 16 16" shape-rendering="crispEdges" style="left:604px;top:106px"><g class="w" transform="translate(1,1)"><path class="f" d="M2 2h11v11h-11z"/></g><g class="g"><path class="f" d="M2 2h11v11h-11z"/></g></svg><svg class="ic" width="16" height="16" viewBox="0 0 16 16" shape-rendering="crispEdges" style="left:627px;top:106px"><g class="w" transform="translate(1,1)"><path class="f" d="M2 2h5v12h-5z"/><path class="f" d="M8 2h5v12h-5z"/></g><g class="g"><path class="f" d="M2 2h5v12h-5z"/><path class="f" d="M8 2h5v12h-5z"/></g></svg><svg class="ic" width="16" height="16" viewBox="0 0 16 16" shape-rendering="crispEdges" style="left:650px;top:106px"><g class="w" transform="translate(1,1)"><path class="f" d="M1 1l10 6.500L1 14z"/><path class="f" d="M11 1h3v13h-3z"/></g><g class="g"><path class="f" d="M1 1l10 6.500L1 14z"/><path class="f" d="M11 1h3v13h-3z"/></g></svg><svg class="ic" width="16" height="16" viewBox="0 0 16 16" shape-rendering="crispEdges" style="left:673px;top:106px"><g class="w" transform="translate(1,1)"><path class="f" d="M1 1l4 3.500L1 8z"/><path class="f" d="M6 1h2v10h-2z"/><path class="f" d="M9 3h2v10h-2z"/><path class="f" d="M3 10h10v4h-10z"/><path class="f" d="M11 5h3v1h-3z"/><path class="f" d="M11 8h3v1h-3z"/></g><g class="g"><path class="f" d="M1 1l4 3.500L1 8z"/><path class="f" d="M6 1h2v10h-2z"/><path class="f" d="M9 3h2v10h-2z"/><path class="f" d="M3 10h10v4h-10z"/><path class="f" d="M11 5h3v1h-3z"/><path class="f" d="M11 8h3v1h-3z"/></g></svg><svg class="ic" width="16" height="16" viewBox="0 0 16 16" shape-rendering="crispEdges" style="left:696px;top:106px"><g class="w" transform="translate(1,1)"><path class="f" d="M3 4h8v10h-8z"/><path class="f" d="M9 2l4 3-4 3z"/><path class="f" d="M13 1h2v9h-2z"/><path class="f" d="M0 6h3v1h-3z"/><path class="f" d="M0 9h3v1h-3z"/><path class="f" d="M0 12h3v1h-3z"/><path class="s" d="M8 10l5-6"/></g><g class="g"><path class="f" d="M3 4h8v10h-8z"/><path class="f" d="M9 2l4 3-4 3z"/><path class="f" d="M13 1h2v9h-2z"/><path class="f" d="M0 6h3v1h-3z"/><path class="f" d="M0 9h3v1h-3z"/><path class="f" d="M0 12h3v1h-3z"/><path class="s" d="M8 10l5-6"/></g></svg><svg class="ic" width="16" height="16" viewBox="0 0 16 16" shape-rendering="crispEdges" style="left:719px;top:106px"><g class="w" transform="translate(1,1)"><path class="f" d="M0 1l7 6.500L0 14zM8 1l7 6.500L8 14z"/></g><g class="g"><path class="f" d="M0 1l7 6.500L0 14zM8 1l7 6.500L8 14z"/></g></svg><svg class="ic" width="16" height="16" viewBox="0 0 16 16" shape-rendering="crispEdges" style="left:742px;top:106px"><g class="w" transform="translate(1,1)"><path class="f" d="M1 1l11 5v3L1 14v-3l7-3.500L1 4z"/><path class="f" d="M12 1h3v13h-3z"/></g><g class="g"><path class="f" d="M1 1l11 5v3L1 14v-3l7-3.500L1 4z"/><path class="f" d="M12 1h3v13h-3z"/></g></svg><svg class="ic" width="16" height="16" viewBox="0 0 16 16" shape-rendering="crispEdges" style="left:785px;top:106px"><g class="w" transform="translate(1,1)"><path class="f" d="M1 4h13v8h-13z"/><path class="f" d="M7 12h2v2h-2z"/></g><g class="g"><path class="f" d="M1 4h13v8h-13z"/><path class="f" d="M7 12h2v2h-2z"/></g><path fill="url(#dotw)" d="M2 5h11v6h-11z"/></svg><svg class="ic" width="16" height="16" viewBox="0 0 16 16" shape-rendering="crispEdges" style="left:808px;top:106px"><g class="w" transform="translate(1,1)"><path class="f" d="M1 4h14v8h-14z"/><path class="f" d="M7 12h2v2h-2z"/></g><g class="g"><path class="f" d="M1 4h14v8h-14z"/><path class="f" d="M7 12h2v2h-2z"/></g><path fill="url(#dotw)" d="M2 5h12v6h-12z"/></svg><svg class="ic" width="16" height="16" viewBox="0 0 16 16" shape-rendering="crispEdges" style="left:831px;top:106px"><g class="w" transform="translate(1,1)"><path class="f" d="M1 4h13v8h-13z"/><path class="f" d="M4 1h7l-3.500 3z"/><path class="f" d="M7 12h2v2h-2z"/></g><g class="g"><path class="f" d="M1 4h13v8h-13z"/><path class="f" d="M4 1h7l-3.500 3z"/><path class="f" d="M7 12h2v2h-2z"/></g><path fill="url(#dotw)" d="M2 5h11v6h-11z"/></svg><svg class="ic" width="16" height="16" viewBox="0 0 16 16" shape-rendering="crispEdges" style="left:854px;top:106px"><g class="w" transform="translate(1,1)"><path class="f" d="M1 4h13v8h-13z"/><path class="f" d="M7 1h1v3h-1z"/><path class="f" d="M7 12h2v2h-2z"/><path class="f" d="M4 14h8v1h-8z"/></g><g class="g"><path class="f" d="M1 4h13v8h-13z"/><path class="f" d="M7 1h1v3h-1z"/><path class="f" d="M7 12h2v2h-2z"/><path class="f" d="M4 14h8v1h-8z"/></g><path fill="url(#dotw)" d="M2 5h11v6h-11z"/></svg><svg class="ic" width="16" height="16" viewBox="0 0 16 16" shape-rendering="crispEdges" style="left:877px;top:106px"><g class="w" transform="translate(1,1)"><path class="k" d="M2 1h12v2h-12z"/><path class="f" d="M7 3h2v12h-2z"/><path class="f" d="M2 6h12v2h-12z"/><path class="f" d="M4 10h9v1h-9z"/></g><g class="g"><path class="k" d="M2 1h12v2h-12z"/><path class="f" d="M7 3h2v12h-2z"/><path class="f" d="M2 6h12v2h-12z"/><path class="f" d="M4 10h9v1h-9z"/></g></svg><svg class="ic" width="16" height="16" viewBox="0 0 16 16" shape-rendering="crispEdges" style="left:900px;top:106px"><g class="w" transform="translate(1,1)"><path class="k" d="M4 1h10v2h-10z"/><path class="f" d="M8 3h2v6h-2z"/><path class="f" d="M0 7h16v2h-16z"/><path class="f" d="M3 5h2v10h-2z"/><path class="f" d="M12 9h2v6h-2z"/><path class="f" d="M1 12h6v1h-6z"/><path class="f" d="M10 12h6v1h-6z"/></g><g class="g"><path class="k" d="M4 1h10v2h-10z"/><path class="f" d="M8 3h2v6h-2z"/><path class="f" d="M0 7h16v2h-16z"/><path class="f" d="M3 5h2v10h-2z"/><path class="f" d="M12 9h2v6h-2z"/><path class="f" d="M1 12h6v1h-6z"/><path class="f" d="M10 12h6v1h-6z"/></g></svg><svg class="ic" width="16" height="16" viewBox="0 0 16 16" shape-rendering="crispEdges" style="left:923px;top:106px"><g class="w" transform="translate(1,1)"><path class="f" d="M3 0h2v7h-2z"/><path class="f" d="M11 0h2v7h-2z"/><path class="f" d="M1 3h6v1h-6z"/><path class="f" d="M9 3h6v1h-6z"/><path class="f" d="M0 6h16v2h-16z"/><path class="f" d="M7 8h2v3h-2z"/><path class="k" d="M2 11h12v3h-12z"/></g><g class="g"><path class="f" d="M3 0h2v7h-2z"/><path class="f" d="M11 0h2v7h-2z"/><path class="f" d="M1 3h6v1h-6z"/><path class="f" d="M9 3h6v1h-6z"/><path class="f" d="M0 6h16v2h-16z"/><path class="f" d="M7 8h2v3h-2z"/><path class="k" d="M2 11h12v3h-12z"/></g></svg><svg class="ic" width="16" height="16" viewBox="0 0 16 16" shape-rendering="crispEdges" style="left:946px;top:106px"><g class="w" transform="translate(1,1)"><path class="f" d="M7 0h2v6h-2z"/><path class="f" d="M4 2h8v1h-8z"/><path class="f" d="M0 6h16v2h-16z"/><path class="f" d="M2 8h2v4h-2z"/><path class="f" d="M12 8h2v4h-2z"/><path class="f" d="M7 8h2v4h-2z"/><path class="k" d="M0 12h7v3h-7z"/><path class="k" d="M9 12h7v3h-7z"/></g><g class="g"><path class="f" d="M7 0h2v6h-2z"/><path class="f" d="M4 2h8v1h-8z"/><path class="f" d="M0 6h16v2h-16z"/><path class="f" d="M2 8h2v4h-2z"/><path class="f" d="M12 8h2v4h-2z"/><path class="f" d="M7 8h2v4h-2z"/><path class="k" d="M0 12h7v3h-7z"/><path class="k" d="M9 12h7v3h-7z"/></g></svg><svg class="ic" width="16" height="16" viewBox="0 0 16 16" shape-rendering="crispEdges" style="left:969px;top:106px"><g class="w" transform="translate(1,1)"><path class="f" d="M0 1h16v2h-16z"/><path class="f" d="M1 5h13v1h-13z"/><path class="f" d="M7 3h2v12h-2z"/><path class="f" d="M3 9h10v1h-10z"/></g><g class="g"><path class="f" d="M0 1h16v2h-16z"/><path class="f" d="M1 5h13v1h-13z"/><path class="f" d="M7 3h2v12h-2z"/><path class="f" d="M3 9h10v1h-10z"/></g></svg><div class="sepv" style="left:992px;top:103px;width:2px;height:22px;"></div><svg class="ic" width="16" height="16" viewBox="0 0 16 16" shape-rendering="crispEdges" style="left:1000px;top:106px"><g class="w" transform="translate(1,1)"><path class="s" d="M2.500 2v5h8v5"/></g><g class="g"><path class="s" d="M2.500 2v5h8v5"/></g></svg>
<div class="" style="left:0px;top:129px;width:1024px;height:588px;background:#848284"></div><div class="" style="left:0px;top:128px;width:1024px;height:1px;background:#848284"></div><div class="" style="left:1px;top:129px;width:1023px;height:1px;background:#424142"></div><div class="" style="left:1px;top:129px;width:1px;height:588px;background:#424142"></div><div class="" style="left:1022px;top:129px;width:1px;height:588px;background:#d6d3ce"></div><div class="" style="left:1023px;top:128px;width:1px;height:590px;background:#fff"></div>
<div class="win" style="left:170px;top:161px;width:327px;height:309px;"></div><div class="" style="left:173px;top:164px;width:321px;height:18px;background:linear-gradient(to right,#848284,#bdbabd)"></div><div class="" style="left:175px;top:166px;height:14px;line-height:14px;color:#d6d3ce;font-weight:bold;letter-spacing:1px;-webkit-text-stroke:0">变更<span class="lb" style="margin-right:-0.6px">PLC</span></div><div class="cbtn" style="left:476px;top:166px;width:16px;height:14px;"></div><svg width="8" height="7" viewBox="0 0 8 7" style="left:480px;top:169px"><path d="M.7 0L7.300 7M7.300 0L.7 7" stroke="#000" stroke-width="1.600" fill="none"/></svg><div class="grp" style="left:185px;top:193px;width:298px;height:32px;"></div><div class="glab" style="left:192px;top:185px;height:14px;line-height:14px">设备名称</div><div class="sunk" style="left:196px;top:201px;width:194px;height:18px;"></div><div class="" style="left:199px;top:203px;height:14px;line-height:14px;">新<span class="l" style="margin-right:-4.8px">PLC1</span></div><div class="grp" style="left:185px;top:236px;width:298px;height:37px;"></div><div class="glab" style="left:192px;top:228px;height:14px;line-height:14px">设备类型</div><div class="sunk" style="left:196px;top:246px;width:197px;height:20px;"></div><div class="" style="left:200px;top:248px;height:14px;line-height:14px;"><span class="l" style="margin-right:-6.0px">CPM2*</span></div><div class="cbtn" style="left:375px;top:248px;width:16px;height:16px;"></div><svg width="7" height="4" viewBox="0 0 7 4" style="left:379px;top:254px"><path d="M0 0h7L3.500 4z" fill="#000"/></svg><div class="btn" style="left:400px;top:246px;width:75px;height:20px;"></div><div style="left:399px;top:248px;width:75px;height:14px;line-height:14px;text-align:center">设定<span class="l" style="margin-right:-7.2px">(<u>S</u>)...</span></div><div class="grp" style="left:185px;top:284px;width:298px;height:56px;"></div><div class="glab" style="left:192px;top:276px;height:14px;line-height:14px">网络类型</div><div class="sunk" style="left:196px;top:293px;width:197px;height:20px;"></div><div class="" style="left:200px;top:295px;height:14px;line-height:14px;"><span class="l" style="margin-right:-12.0px">SYSMAC WAY</span></div><div class="cbtn" style="left:375px;top:295px;width:16px;height:16px;"></div><svg width="7" height="4" viewBox="0 0 7 4" style="left:379px;top:301px"><path d="M0 0h7L3.500 4z" fill="#000"/></svg><div class="btn" style="left:401px;top:293px;width:75px;height:20px;"></div><div style="left:400px;top:295px;width:75px;height:14px;line-height:14px;text-align:center">设定<span class="l" style="margin-right:-7.2px">(<u>E</u>)...</span></div><div class="grp" style="left:184px;top:353px;width:299px;height:77px;"></div><div class="glab" style="left:191px;top:345px;height:14px;line-height:14px">注释</div><div class="sunk" style="left:196px;top:362px;width:278px;height:60px;"></div><div class="chk" style="left:456px;top:364px;width:16px;height:56px;"></div><div class="cbtn" style="left:456px;top:364px;width:16px;height:16px;"></div><svg width="8" height="5" viewBox="0 0 8 5" style="left:460px;top:370px"><path d="M1 5h7L4.500 1z" fill="#fff"/><path d="M0 4h7L3.500 0z" fill="#848284"/></svg><div class="cbtn" style="left:456px;top:404px;width:16px;height:16px;"></div><svg width="8" height="5" viewBox="0 0 8 5" style="left:460px;top:410px"><path d="M1 1h7L4.500 5z" fill="#fff"/><path d="M0 0h7L3.500 4z" fill="#848284"/></svg><div class="btn" style="left:184px;top:440px;width:75px;height:21px;"></div><div style="left:183px;top:442px;width:75px;height:14px;line-height:14px;text-align:center">确定</div><div class="btn" style="left:269px;top:440px;width:75px;height:21px;"></div><div style="left:268px;top:442px;width:75px;height:14px;line-height:14px;text-align:center">取消</div><div class="btn" style="left:407px;top:440px;width:75px;height:21px;"></div><div style="left:406px;top:442px;width:75px;height:14px;line-height:14px;text-align:center">帮助<span class="l" style="margin-right:-3.6px">(<u>H</u>)</span></div>
<div class="win" style="left:509px;top:159px;width:401px;height:310px;"></div><div class="" style="left:512px;top:162px;width:395px;height:18px;background:linear-gradient(to right,#08246b,#a5cbf7)"></div><div class="" style="left:514px;top:164px;height:14px;line-height:14px;color:#fff;font-weight:bold;letter-spacing:1px;-webkit-text-stroke:0">网络设置<span class="lb" style="margin-right:-2.4px">[SYSMAC WAY]</span></div><div class="cbtn" style="left:889px;top:164px;width:16px;height:14px;"></div><svg width="8" height="7" viewBox="0 0 8 7" style="left:893px;top:167px"><path d="M.7 0L7.300 7M7.300 0L.7 7" stroke="#000" stroke-width="1.600" fill="none"/></svg><div class="" style="left:518px;top:206px;width:383px;height:227px;background:#d6d3ce;box-shadow:inset -1px -1px #424142,inset 1px 1px #fff,inset -2px -2px #848284"></div><div class="" style="left:520px;top:189px;width:48px;height:18px;box-shadow:inset 1px 1px #fff,inset -1px 0 #424142,inset -2px 0 #848284;border-radius:2px 2px 0 0;background:#d6d3ce"></div><div class="" style="left:526px;top:191px;height:14px;line-height:14px;">网络</div><div class="" style="left:617px;top:189px;width:71px;height:18px;box-shadow:inset 1px 1px #fff,inset -1px 0 #424142,inset -2px 0 #848284;border-radius:2px 2px 0 0;background:#d6d3ce"></div><div class="" style="left:622px;top:191px;height:14px;line-height:14px;">调制解调器</div><div class="" style="left:566px;top:187px;width:52px;height:21px;box-shadow:inset 1px 1px #fff,inset -1px 0 #424142,inset -2px 0 #848284;border-radius:2px 2px 0 0;background:#d6d3ce"></div><div class="" style="left:574px;top:188px;height:14px;line-height:14px;">驱动器</div><div class="grp" style="left:530px;top:229px;width:164px;height:113px;"></div><div class="glab" style="left:537px;top:221px;height:14px;line-height:14px">连接</div><div class="" style="left:551px;top:245px;height:14px;line-height:14px;">端口名称</div><div class="" style="left:556px;top:260px;width:1px;height:1px;background:#424142"></div><div class="" style="left:564px;top:260px;width:1px;height:1px;background:#424142"></div><div class="sunk" style="left:617px;top:244px;width:65px;height:19px;"></div><div class="" style="left:621px;top:246px;height:14px;line-height:14px;"><span class="l" style="margin-right:-4.8px">COM1</span></div><div class="cbtn" style="left:664px;top:246px;width:16px;height:15px;"></div><svg width="7" height="4" viewBox="0 0 7 4" style="left:668px;top:251px"><path d="M0 0h7L3.500 4z" fill="#000"/></svg><div class="" style="left:551px;top:280px;height:14px;line-height:14px;">波特率</div><div class="" style="left:556px;top:295px;width:1px;height:1px;background:#424142"></div><div class="" style="left:564px;top:295px;width:1px;height:1px;background:#424142"></div><div class="sunk" style="left:551px;top:313px;width:13px;height:13px;background:#d6d3ce"></div><div class="dis" style="left:570px;top:312px;height:14px;line-height:14px;">自动检测波特率</div><div class="grp" style="left:705px;top:229px;width:165px;height:113px;"></div><div class="glab" style="left:712px;top:221px;height:14px;line-height:14px">数据格式</div><div class="" style="left:726px;top:245px;height:14px;line-height:14px;">数据位</div><div class="sunk" style="left:792px;top:244px;width:65px;height:19px;"></div><div class="" style="left:796px;top:246px;height:14px;line-height:14px;"><span class="l" style="margin-right:-1.2px">7</span></div><div class="cbtn" style="left:839px;top:246px;width:16px;height:15px;"></div><svg width="7" height="4" viewBox="0 0 7 4" style="left:843px;top:251px"><path d="M0 0h7L3.500 4z" fill="#000"/></svg><div class="" style="left:726px;top:280px;height:14px;line-height:14px;">校验<span class="l" style="margin-right:-4.8px">(<u>P</u>):</span></div><div class="sunk" style="left:792px;top:279px;width:65px;height:19px;"></div><div class="" style="left:796px;top:281px;height:14px;line-height:14px;"><span class="l" style="margin-right:-4.8px">Even</span></div><div class="cbtn" style="left:839px;top:281px;width:16px;height:15px;"></div><svg width="7" height="4" viewBox="0 0 7 4" style="left:843px;top:286px"><path d="M0 0h7L3.500 4z" fill="#000"/></svg><div class="" style="left:726px;top:314px;height:14px;line-height:14px;">停止位</div><div class="sunk" style="left:792px;top:313px;width:65px;height:19px;"></div><div class="" style="left:796px;top:315px;height:14px;line-height:14px;"><span class="l" style="margin-right:-1.2px">2</span></div><div class="cbtn" style="left:839px;top:315px;width:16px;height:15px;"></div><svg width="7" height="4" viewBox="0 0 7 4" style="left:843px;top:320px"><path d="M0 0h7L3.500 4z" fill="#000"/></svg><div class="" style="left:617px;top:264px;width:66px;height:38px;background:#fff;border:1px solid #000"></div><div class="" style="left:619px;top:264px;height:14px;line-height:14px;"><span class="l" style="margin-right:-4.8px">COM1</span></div><div class="" style="left:618px;top:277px;width:64px;height:12px;background:#08246b;outline:1px dotted #d6d3ce;outline-offset:-1px"></div><div class="" style="left:619px;top:275px;height:14px;line-height:14px;color:#fff"><span class="l" style="margin-right:-4.8px">COM2</span></div><div class="" style="left:619px;top:287px;height:14px;line-height:14px;"><span class="l" style="margin-right:-4.8px">COM3</span></div><div class="btn" style="left:671px;top:358px;width:77px;height:18px;"></div><div style="left:670px;top:359px;width:77px;height:14px;line-height:14px;text-align:center">缺省<span class="l" style="margin-right:-3.6px">(<u>D</u>)</span></div><div class="dbtn" style="left:664px;top:439px;width:76px;height:21px;"></div><div style="left:663px;top:441px;width:76px;height:14px;line-height:14px;text-align:center">确定</div><div class="btn" style="left:745px;top:439px;width:75px;height:21px;"></div><div style="left:744px;top:441px;width:75px;height:14px;line-height:14px;text-align:center">取消</div><div class="btn" style="left:826px;top:439px;width:75px;height:21px;"></div><div style="left:825px;top:441px;width:75px;height:14px;line-height:14px;text-align:center">帮助</div>
<div class="face" style="left:0px;top:717px;width:1024px;height:23px;border-top:1px solid #e8e6e2"></div><div class="" style="left:0px;top:718px;width:1024px;height:1px;background:#fff"></div><div class="" style="left:2px;top:721px;height:14px;line-height:14px;">需要帮助，请按<span class="l" style="margin-right:-2.4px">F1</span></div><div class="pane" style="left:269px;top:721px;width:20px;height:17px;"></div><div class="pane" style="left:291px;top:721px;width:66px;height:17px;"></div><div class="pane" style="left:359px;top:721px;width:256px;height:17px;"></div><div class="pane" style="left:617px;top:721px;width:56px;height:17px;"></div><div class="pane" style="left:675px;top:721px;width:56px;height:17px;"></div><div class="pane" style="left:732px;top:721px;width:132px;height:17px;"></div><div class="pane" style="left:866px;top:721px;width:106px;height:17px;"></div><div class="pane" style="left:974px;top:721px;width:24px;height:17px;"></div><div class="pane" style="left:1000px;top:721px;width:23px;height:17px;"></div>
<div class="face" style="left:0px;top:739px;width:1024px;height:29px;border-top:1px solid #fff"></div><div class="btn" style="left:2px;top:742px;width:47px;height:22px;"></div><svg width="18" height="17" viewBox="0 0 18 17" style="left:3px;top:743px"><g transform="translate(3.200,1.500) rotate(11) skewX(-8)">
<path d="M0 .8c2-1 4.500-1 6.500 0v5.400c-2-1-4.500-1-6.500 0z" fill="#f0682a"/><path d="M7.500 1.200c2 1 4.500 1 6.500 0v5.400c-2 1-4.500 1-6.500 0z" fill="#6cc23c"/>
<path d="M0 7.200c2-1 4.500-1 6.500 0v5.400c-2-1-4.500-1-6.500 0z" fill="#3a70d8"/><path d="M7.500 7.600c2 1 4.500 1 6.500 0v5.400c-2 1-4.500 1-6.500 0z" fill="#f6c81a"/></g></svg><div class="" style="left:22px;top:745px;height:14px;line-height:14px;font-weight:bold">开始</div><svg width="17" height="17" viewBox="0 0 17 17" style="left:57px;top:745px"><circle cx="8.500" cy="8.500" r="6.800" fill="none" stroke="#9098b0" stroke-width="3"/><path d="M2.200 6A6.800 6.800 0 0 1 11 2.200" stroke="#e05030" stroke-width="3" fill="none"/><path d="M12.500 3A6.800 6.800 0 0 1 14.500 12" stroke="#58a040" stroke-width="3" fill="none"/><path d="M12.500 14A6.800 6.800 0 0 1 3 12.500" stroke="#3058c0" stroke-width="3" fill="none"/><circle cx="8.500" cy="8.500" r="5.200" fill="#e8ecf8"/><circle cx="8.500" cy="8.500" r="4.200" fill="#1830a8"/><path d="M7 5.800l4.200 2.700L7 11.200z" fill="#fff"/></svg><svg width="17" height="16" viewBox="0 0 17 16" style="left:81px;top:746px"><circle cx="8.5" cy="8.5" r="6" fill="none" stroke="#2a78d8" stroke-width="3"/><rect x="5" y="7.5" width="9" height="2" fill="#2a78d8"/><rect x="10" y="9.5" width="6" height="2.5" fill="#d6d3ce"/><path d="M1.5 13C0 8 8 1 15.5 1.5 10 2 3 8 3.500 13z" fill="#f0b020"/></svg><svg width="17" height="17" viewBox="0 0 17 17" style="left:102px;top:745px"><ellipse cx="8.500" cy="4.800" rx="4.300" ry="4.500" fill="#000"/><ellipse cx="8.500" cy="10.500" rx="6" ry="5" fill="#000"/><path d="M2.500 8q-2 3-1 5l2-2zM14.500 8q2 3 1 5l-2-2z" fill="#000"/><ellipse cx="8.500" cy="12" rx="3.800" ry="3.800" fill="#fff"/><path d="M4 8.500q4.500 2.500 9 0v2.200q-4.500 2.500-9 0z" fill="#e02020"/><path d="M5 10.500h2.200v3H5z" fill="#e02020"/><ellipse cx="7" cy="4" rx="1.100" ry="1.500" fill="#fff"/><ellipse cx="10" cy="4" rx="1.100" ry="1.500" fill="#fff"/><circle cx="7.300" cy="4.200" r=".5" fill="#000"/><circle cx="9.700" cy="4.200" r=".5" fill="#000"/><ellipse cx="8.500" cy="6.600" rx="2.300" ry=".9" fill="#f0a000"/><ellipse cx="5.500" cy="15.800" rx="2.600" ry="1.100" fill="#f0a000"/><ellipse cx="11.500" cy="15.800" rx="2.600" ry="1.100" fill="#f0a000"/></svg><svg width="8" height="7" viewBox="0 0 8 7" style="left:131px;top:746px" shape-rendering="crispEdges"><path d="M0 0h2l2 3-2 3H0l2-3zM4 0h2l2 3-2 3H4l2-3z" fill="#000"/></svg><div class="btn" style="left:143px;top:742px;width:159px;height:22px;"></div><svg width="16" height="16" viewBox="0 0 16 16" style="left:147px;top:745px"><rect width="16" height="16" rx="2" fill="#0c4890"/><rect x="1" y="1" width="14" height="14" rx="1.500" fill="#1868c0"/><rect x="1" y="1" width="14" height="6" rx="1.500" fill="#2880d8"/><path d="M13 3C9 4 5 6 3 9l3 .5C5 11 6 13 9 14 7 12 7.500 10 9 9l-2.500-.5C8 6 10 4.500 13 3z" fill="#fff"/></svg><div class="" style="left:167px;top:745px;height:14px;line-height:14px;font-size:12px">迅雷<span class="l" style="margin-right:-1.2px">5</span></div><div class="btn" style="left:306px;top:742px;width:160px;height:22px;"></div><svg width="17" height="16" viewBox="0 0 17 16" style="left:311px;top:745px"><circle cx="8.5" cy="8.5" r="6" fill="none" stroke="#2a78d8" stroke-width="3"/><rect x="5" y="7.5" width="9" height="2" fill="#2a78d8"/><rect x="10" y="9.5" width="6" height="2.5" fill="#d6d3ce"/><path d="M1.5 13C0 8 8 1 15.5 1.5 10 2 3 8 3.500 13z" fill="#f0b020"/></svg><div class="" style="left:329px;top:745px;height:14px;line-height:14px;"><span class="l" style="margin-right:-7.2px">CPM2AH</span>型号的用什么<span class="l" style="margin-right:-3.6px">...</span></div><div class="chk" style="left:469px;top:742px;width:160px;height:22px;box-shadow:inset -1px -1px #fff,inset 1px 1px #424142,inset -2px -2px #d6d3ce,inset 2px 2px #848284"></div><svg width="16" height="15" viewBox="0 0 17 16" preserveAspectRatio="none" style="left:474px;top:746px" shape-rendering="crispEdges">
<path d="M2 0h13v1h1v1h1v7h-1v1h1v5h-1v1H1v-1H0v-5h1V9H0V2h1V1h1z" fill="#000"/>
<rect x="2" y="3" width="13" height="5" fill="#d6d3ce"/><rect x="2" y="3" width="2" height="5" fill="#fff"/>
<path d="M3 4h2v3H2V5h1z" fill="#000"/><rect x="7" y="3" width="1" height="5" fill="#a0a0a0"/><rect x="11" y="3" width="1" height="5" fill="#a0a0a0"/>
<rect x="4" y="1" width="1" height="1" fill="#40c040"/>
<rect x="0" y="9" width="1" height="1" fill="#848284"/><rect x="16" y="9" width="1" height="1" fill="#848284"/>
<path d="M2 11h12v1h1v1h-1v1H2v-1H1v-1h1z" fill="#f0f000"/><path d="M3 12h1v1H3zM5 12h1v1H5zM7 12h1v1H7zM9 12h1v1H9zM11 12h1v1h-1zM13 12h1v1h-1z" fill="#808000"/></svg><div class="" style="left:494px;top:746px;height:14px;line-height:14px;"><span class="l" style="margin-right:-15.6px">CX-Programmer</span></div><svg width="16" height="13" viewBox="0 0 16 13" style="left:769px;top:748px" shape-rendering="crispEdges"><path d="M5 0h1v1h1v1h1V1h1V0h1v1H9v2H8v0H7V2H6V1H5z" fill="#000"/><rect x="0" y="3" width="16" height="10" fill="#000"/><rect x="1" y="4" width="14" height="8" fill="#fff"/><g fill="#000"><rect x="2" y="5" width="1" height="1"/><rect x="4" y="5" width="1" height="1"/><rect x="6" y="5" width="1" height="1"/><rect x="8" y="5" width="1" height="1"/><rect x="10" y="5" width="1" height="1"/><rect x="12" y="5" width="2" height="1"/><rect x="3" y="7" width="1" height="1"/><rect x="5" y="7" width="1" height="1"/><rect x="7" y="7" width="1" height="1"/><rect x="9" y="7" width="1" height="1"/><rect x="11" y="7" width="1" height="1"/><rect x="13" y="7" width="1" height="1"/><rect x="2" y="9" width="1" height="1"/><rect x="4" y="9" width="8" height="1"/><rect x="13" y="9" width="1" height="1"/></g></svg><div class="" style="left:788px;top:743px;width:1px;height:21px;background:#848284"></div><div class="" style="left:789px;top:743px;width:1px;height:21px;background:#fff"></div><svg width="14" height="16" viewBox="0 0 14 16" style="left:797px;top:747px" shape-rendering="crispEdges"><path d="M1 0h11v1h1v10h-1v1H8v1H7v1H6v1H5v-3H1v-1H0V1h1z" fill="#000"/><path d="M1 1h11v10H1z" fill="#ffffe1"/><path d="M6 12h1v1H6z" fill="#ffffe1"/></svg><div style="left:800px;top:748px;font:bold 11px 'Liberation Sans',sans-serif;line-height:11px">?</div><div class="" style="left:816px;top:743px;width:1px;height:21px;background:#848284"></div><div class="" style="left:817px;top:743px;width:1px;height:21px;background:#fff"></div><div class="" style="left:829px;top:747px;width:57px;height:15px;background:#6f6;border:1px solid #fff;box-shadow:1px 1px 0 #848284;border-color:#fff #848284 #848284 #fff;background:#66ff44"></div><div class="" style="left:886px;top:750px;width:3px;height:9px;background:#848284"></div><div style="left:829px;top:748px;width:57px;text-align:center;font:bold 11px 'Liberation Sans',sans-serif;line-height:14px;letter-spacing:0.3px">100%</div><svg width="16" height="12" viewBox="0 0 16 12" style="left:897px;top:748px" shape-rendering="crispEdges"><path d="M0 5h3v2H0zM3 3h1V2h1V1h1V0h5v12H6v-1H5v-1H4V9H3zM11 2h5v2h-5zM11 8h5v2h-5z" fill="#000"/></svg><div class="pane" style="left:922px;top:742px;width:100px;height:23px;"></div><svg width="16" height="16" viewBox="0 0 16 16" style="left:925px;top:747px" shape-rendering="crispEdges"><rect x="1" y="5" width="15" height="11" fill="#424142"/><rect x="2" y="6" width="4" height="4" fill="#d6d3ce"/><rect x="7" y="6" width="4" height="4" fill="#d6d3ce"/><rect x="12" y="6" width="3" height="4" fill="#d6d3ce"/><rect x="2" y="11" width="4" height="4" fill="#d6d3ce"/><rect x="7" y="11" width="4" height="4" fill="#d6d3ce"/><rect x="12" y="11" width="3" height="4" fill="#d6d3ce"/><rect x="1" y="2" width="7" height="2" fill="#2030c0"/><circle cx="12" cy="3" r="3" fill="#e8e020"/></svg><svg width="16" height="16" viewBox="0 0 16 16" style="left:943px;top:746px"><rect width="16" height="16" rx="2" fill="#0c4890"/><rect x="1" y="1" width="14" height="14" rx="1.500" fill="#1868c0"/><rect x="1" y="1" width="14" height="6" rx="1.500" fill="#2880d8"/><path d="M13 3C9 4 5 6 3 9l3 .5C5 11 6 13 9 14 7 12 7.500 10 9 9l-2.500-.5C8 6 10 4.500 13 3z" fill="#fff"/></svg><div class="" style="left:961px;top:746px;width:16px;height:16px;background:linear-gradient(to right,#2c2cb0,#5858d8 50%,#8888e8);overflow:hidden"><div style="left:0;top:2px;font:bold 6px 'Liberation Sans',sans-serif;color:#fff;line-height:6px;letter-spacing:-0.2px;-webkit-text-stroke:0">LICEN</div><div style="left:7px;top:8px;font:italic bold 8px 'Liberation Sans',sans-serif;color:#a0a0f0;line-height:8px;-webkit-text-stroke:0">M</div></div><div style="left:984px;top:748px;font:10px 'Liberation Sans',sans-serif;line-height:14px;letter-spacing:1px;-webkit-text-stroke:0.1px">13:06</div>
<div class="" style="left:952px;top:67px;width:41px;height:41px;border:2px solid #9cc4ee;border-radius:6px;background:linear-gradient(#eef4fd,#e6eefb 60%,#e0eafa);box-shadow:0 0 1px #8ab4e6"></div><svg width="37" height="5" viewBox="0 0 37 5" style="left:955px;top:101px"><path d="M1 2.500L12 2l1-.6h4l1 .6h2l1-.6h4l1-.8h3l1 .8h5l1-.400V3q-1 1.500-3 1.500H3.500Q1.500 4.500 1 2.500z" fill="#2478d8"/></svg><div class="" style="left:957px;top:69px;height:14px;line-height:14px;-webkit-text-stroke:0.1px"><span class="l" style="margin-right:-6.0px">74.5%</span></div>
</div>
</body></html>
